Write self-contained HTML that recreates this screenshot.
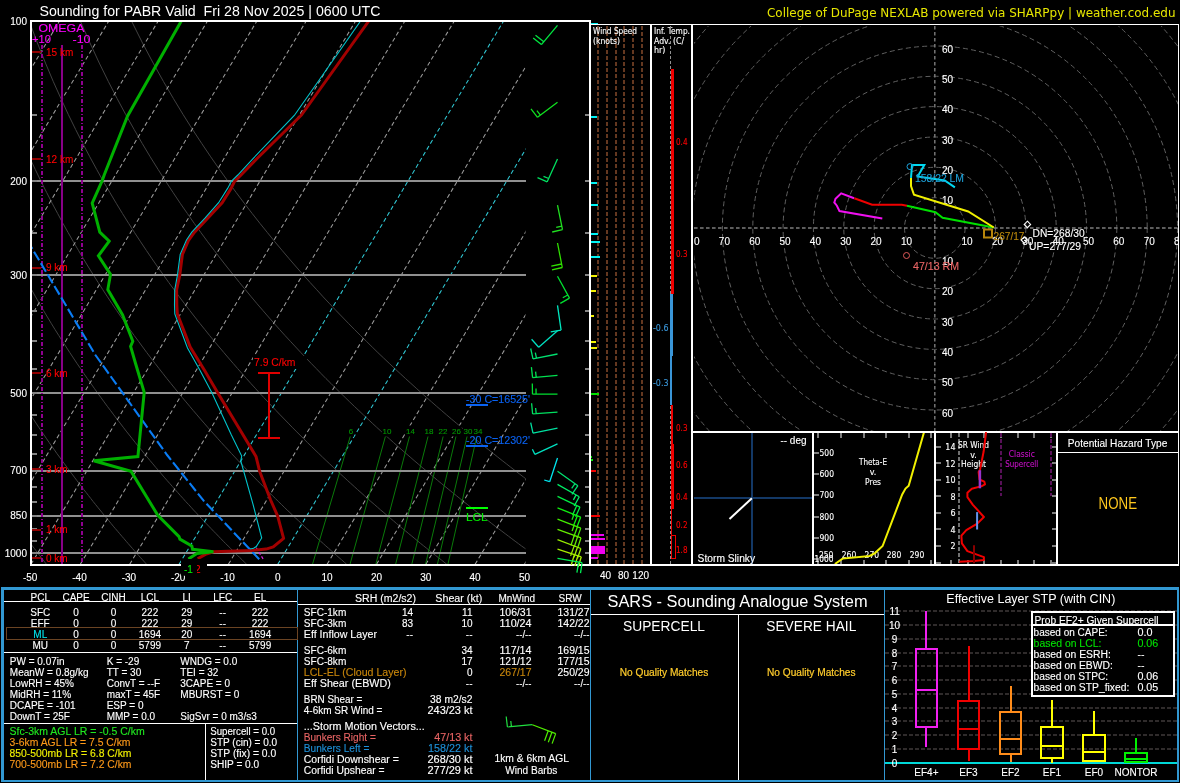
<!DOCTYPE html>
<html><head><meta charset="utf-8"><title>Sounding for PABR</title>
<style>
html,body{margin:0;padding:0;background:#000;}
body{width:1180px;height:783px;overflow:hidden;font-family:"Liberation Sans",sans-serif;}
svg{display:block;will-change:transform}
text{white-space:pre}
</style></head><body>
<svg width="1180" height="783" viewBox="0 0 1180 783">
<rect x="0" y="0" width="1180" height="783" fill="#000"/>
<defs><clipPath id="skc"><rect x="31" y="21" width="494.5" height="543.5"/></clipPath><clipPath id="skf"><rect x="31" y="21" width="559" height="543.5"/></clipPath></defs>
<g clip-path="url(#skc)">
<polyline points="-53.6,564.3 -55.1,562.1 -56.5,559.8 -58.0,557.6 -59.5,555.3 -61.0,553.0 -62.4,550.7 -63.9,548.3 -65.4,546.0 -66.9,543.6 -68.5,541.2 -70.0,538.7 -71.5,536.2 -73.0,533.7 -74.6,531.2 -76.1,528.7 -77.7,526.1 -79.3,523.5 -80.8,520.8 -82.4,518.2 -84.0,515.5 -85.6,512.7 -87.2,510.0 -88.8,507.2 -90.4,504.3 -92.1,501.5 -93.7,498.5 -95.4,495.6 -97.0,492.6 -98.7,489.6 -100.4,486.5 -102.0,483.4 -103.7,480.3 -105.4,477.1 -107.1,473.9 -108.9,470.6 -110.6,467.3 -112.3,463.9 -114.1,460.5 -115.8,457.0 -117.6,453.5 -119.4,449.9 -121.2,446.3 -123.0,442.6 -124.8,438.8 -126.6,435.0 -128.4,431.1 -130.3,427.2 -132.1,423.1 -134.0,419.0 -135.9,414.9 -137.7,410.6 -139.6,406.3 -141.5,401.9 -143.5,397.4 -145.4,392.9 -147.3,388.2 -149.3,383.4 -151.3,378.6 -153.3,373.6 -155.2,368.5 -157.3,363.3 -159.3,358.0 -161.3,352.6 -163.3,347.0 -165.4,341.3 -167.5,335.5 -169.5,329.5 -171.6,323.3 -173.7,317.0 -175.8,310.5 -178.0,303.8 -180.1,296.9 -182.3,289.7 -184.4,282.4 -186.6,274.8 -188.7,267.0 -190.9,258.9 -193.1,250.5 -195.3,241.8 -197.5,232.7 -199.7,223.3 -201.9,213.4 -204.0,203.2 -206.2,192.4 -208.4,181.2 -210.5,169.3 -212.6,156.8 -214.6,143.6 -216.6,129.6 -218.6,114.7 -220.4,98.7 -222.2,81.6 -223.8,63.1 -225.2,43.0 -226.4,21.0" fill="none" stroke="#414141" stroke-width="1"/>
<polyline points="46.5,564.3 44.7,562.1 43.0,559.8 41.3,557.6 39.5,555.3 37.7,553.0 36.0,550.7 34.2,548.3 32.4,546.0 30.6,543.6 28.8,541.2 27.0,538.7 25.2,536.2 23.3,533.7 21.5,531.2 19.6,528.7 17.8,526.1 15.9,523.5 14.0,520.8 12.1,518.2 10.2,515.5 8.3,512.7 6.4,510.0 4.4,507.2 2.5,504.3 0.5,501.5 -1.4,498.5 -3.4,495.6 -5.4,492.6 -7.4,489.6 -9.4,486.5 -11.5,483.4 -13.5,480.3 -15.6,477.1 -17.6,473.9 -19.7,470.6 -21.8,467.3 -23.9,463.9 -26.0,460.5 -28.2,457.0 -30.3,453.5 -32.5,449.9 -34.7,446.3 -36.9,442.6 -39.1,438.8 -41.3,435.0 -43.5,431.1 -45.8,427.2 -48.1,423.1 -50.3,419.0 -52.7,414.9 -55.0,410.6 -57.3,406.3 -59.7,401.9 -62.0,397.4 -64.4,392.9 -66.8,388.2 -69.3,383.4 -71.7,378.6 -74.2,373.6 -76.7,368.5 -79.2,363.3 -81.7,358.0 -84.3,352.6 -86.8,347.0 -89.4,341.3 -92.0,335.5 -94.7,329.5 -97.3,323.3 -100.0,317.0 -102.7,310.5 -105.5,303.8 -108.2,296.9 -111.0,289.7 -113.8,282.4 -116.6,274.8 -119.4,267.0 -122.3,258.9 -125.2,250.5 -128.1,241.8 -131.1,232.7 -134.0,223.3 -137.0,213.4 -140.0,203.2 -143.0,192.4 -146.0,181.2 -149.1,169.3 -152.1,156.8 -155.1,143.6 -158.2,129.6 -161.2,114.7 -164.2,98.7 -167.1,81.6 -169.9,63.1 -172.7,43.0 -175.3,21.0" fill="none" stroke="#414141" stroke-width="1"/>
<polyline points="146.6,564.3 144.6,562.1 142.5,559.8 140.5,557.6 138.5,555.3 136.4,553.0 134.4,550.7 132.3,548.3 130.3,546.0 128.2,543.6 126.1,541.2 124.0,538.7 121.8,536.2 119.7,533.7 117.6,531.2 115.4,528.7 113.2,526.1 111.1,523.5 108.9,520.8 106.7,518.2 104.4,515.5 102.2,512.7 100.0,510.0 97.7,507.2 95.4,504.3 93.1,501.5 90.8,498.5 88.5,495.6 86.2,492.6 83.8,489.6 81.5,486.5 79.1,483.4 76.7,480.3 74.3,477.1 71.9,473.9 69.4,470.6 67.0,467.3 64.5,463.9 62.0,460.5 59.5,457.0 56.9,453.5 54.4,449.9 51.8,446.3 49.2,442.6 46.6,438.8 44.0,435.0 41.4,431.1 38.7,427.2 36.0,423.1 33.3,419.0 30.6,414.9 27.8,410.6 25.0,406.3 22.2,401.9 19.4,397.4 16.5,392.9 13.7,388.2 10.8,383.4 7.8,378.6 4.9,373.6 1.9,368.5 -1.1,363.3 -4.2,358.0 -7.2,352.6 -10.3,347.0 -13.5,341.3 -16.6,335.5 -19.8,329.5 -23.0,323.3 -26.3,317.0 -29.6,310.5 -32.9,303.8 -36.3,296.9 -39.7,289.7 -43.1,282.4 -46.6,274.8 -50.1,267.0 -53.7,258.9 -57.3,250.5 -61.0,241.8 -64.6,232.7 -68.4,223.3 -72.1,213.4 -76.0,203.2 -79.8,192.4 -83.7,181.2 -87.7,169.3 -91.6,156.8 -95.7,143.6 -99.7,129.6 -103.8,114.7 -107.9,98.7 -112.0,81.6 -116.1,63.1 -120.2,43.0 -124.2,21.0" fill="none" stroke="#414141" stroke-width="1"/>
<polyline points="246.6,564.3 244.4,562.1 242.1,559.8 239.8,557.6 237.5,555.3 235.1,553.0 232.8,550.7 230.5,548.3 228.1,546.0 225.7,543.6 223.3,541.2 220.9,538.7 218.5,536.2 216.1,533.7 213.6,531.2 211.2,528.7 208.7,526.1 206.2,523.5 203.7,520.8 201.2,518.2 198.7,515.5 196.1,512.7 193.5,510.0 191.0,507.2 188.4,504.3 185.7,501.5 183.1,498.5 180.4,495.6 177.8,492.6 175.1,489.6 172.4,486.5 169.7,483.4 166.9,480.3 164.1,477.1 161.4,473.9 158.6,470.6 155.7,467.3 152.9,463.9 150.0,460.5 147.1,457.0 144.2,453.5 141.3,449.9 138.3,446.3 135.3,442.6 132.3,438.8 129.3,435.0 126.2,431.1 123.2,427.2 120.1,423.1 116.9,419.0 113.8,414.9 110.6,410.6 107.3,406.3 104.1,401.9 100.8,397.4 97.5,392.9 94.2,388.2 90.8,383.4 87.4,378.6 83.9,373.6 80.5,368.5 76.9,363.3 73.4,358.0 69.8,352.6 66.2,347.0 62.5,341.3 58.8,335.5 55.0,329.5 51.2,323.3 47.4,317.0 43.5,310.5 39.6,303.8 35.6,296.9 31.6,289.7 27.5,282.4 23.3,274.8 19.1,267.0 14.9,258.9 10.6,250.5 6.2,241.8 1.8,232.7 -2.7,223.3 -7.3,213.4 -11.9,203.2 -16.6,192.4 -21.4,181.2 -26.2,169.3 -31.2,156.8 -36.2,143.6 -41.2,129.6 -46.4,114.7 -51.6,98.7 -56.9,81.6 -62.2,63.1 -67.6,43.0 -73.0,21.0" fill="none" stroke="#414141" stroke-width="1"/>
<polyline points="346.7,564.3 344.2,562.1 341.6,559.8 339.0,557.6 336.4,555.3 333.8,553.0 331.2,550.7 328.6,548.3 325.9,546.0 323.3,543.6 320.6,541.2 317.9,538.7 315.2,536.2 312.5,533.7 309.7,531.2 306.9,528.7 304.2,526.1 301.4,523.5 298.6,520.8 295.7,518.2 292.9,515.5 290.0,512.7 287.1,510.0 284.2,507.2 281.3,504.3 278.3,501.5 275.4,498.5 272.4,495.6 269.4,492.6 266.3,489.6 263.3,486.5 260.2,483.4 257.1,480.3 254.0,477.1 250.9,473.9 247.7,470.6 244.5,467.3 241.3,463.9 238.0,460.5 234.8,457.0 231.5,453.5 228.2,449.9 224.8,446.3 221.4,442.6 218.0,438.8 214.6,435.0 211.1,431.1 207.6,427.2 204.1,423.1 200.5,419.0 197.0,414.9 193.3,410.6 189.7,406.3 186.0,401.9 182.2,397.4 178.5,392.9 174.7,388.2 170.8,383.4 166.9,378.6 163.0,373.6 159.0,368.5 155.0,363.3 150.9,358.0 146.8,352.6 142.7,347.0 138.5,341.3 134.2,335.5 129.9,329.5 125.5,323.3 121.1,317.0 116.6,310.5 112.1,303.8 107.5,296.9 102.8,289.7 98.1,282.4 93.3,274.8 88.4,267.0 83.5,258.9 78.5,250.5 73.4,241.8 68.2,232.7 62.9,223.3 57.6,213.4 52.1,203.2 46.6,192.4 40.9,181.2 35.2,169.3 29.3,156.8 23.3,143.6 17.2,129.6 11.0,114.7 4.7,98.7 -1.8,81.6 -8.4,63.1 -15.1,43.0 -21.9,21.0" fill="none" stroke="#414141" stroke-width="1"/>
<polyline points="446.8,564.3 444.0,562.1 441.2,559.8 438.3,557.6 435.4,555.3 432.5,553.0 429.6,550.7 426.7,548.3 423.8,546.0 420.8,543.6 417.9,541.2 414.9,538.7 411.9,536.2 408.8,533.7 405.8,531.2 402.7,528.7 399.6,526.1 396.5,523.5 393.4,520.8 390.3,518.2 387.1,515.5 383.9,512.7 380.7,510.0 377.5,507.2 374.2,504.3 370.9,501.5 367.6,498.5 364.3,495.6 361.0,492.6 357.6,489.6 354.2,486.5 350.8,483.4 347.3,480.3 343.9,477.1 340.4,473.9 336.8,470.6 333.3,467.3 329.7,463.9 326.1,460.5 322.4,457.0 318.8,453.5 315.0,449.9 311.3,446.3 307.5,442.6 303.7,438.8 299.9,435.0 296.0,431.1 292.1,427.2 288.2,423.1 284.2,419.0 280.2,414.9 276.1,410.6 272.0,406.3 267.9,401.9 263.7,397.4 259.4,392.9 255.2,388.2 250.8,383.4 246.5,378.6 242.1,373.6 237.6,368.5 233.1,363.3 228.5,358.0 223.9,352.6 219.2,347.0 214.4,341.3 209.6,335.5 204.8,329.5 199.8,323.3 194.8,317.0 189.8,310.5 184.6,303.8 179.4,296.9 174.1,289.7 168.7,282.4 163.3,274.8 157.7,267.0 152.1,258.9 146.4,250.5 140.6,241.8 134.6,232.7 128.6,223.3 122.4,213.4 116.2,203.2 109.8,192.4 103.2,181.2 96.6,169.3 89.8,156.8 82.8,143.6 75.7,129.6 68.4,114.7 61.0,98.7 53.3,81.6 45.5,63.1 37.4,43.0 29.2,21.0" fill="none" stroke="#414141" stroke-width="1"/>
<polyline points="546.9,564.3 543.8,562.1 540.7,559.8 537.6,557.6 534.4,555.3 531.2,553.0 528.1,550.7 524.9,548.3 521.6,546.0 518.4,543.6 515.1,541.2 511.8,538.7 508.5,536.2 505.2,533.7 501.9,531.2 498.5,528.7 495.1,526.1 491.7,523.5 488.3,520.8 484.8,518.2 481.3,515.5 477.8,512.7 474.3,510.0 470.7,507.2 467.2,504.3 463.5,501.5 459.9,498.5 456.3,495.6 452.6,492.6 448.9,489.6 445.1,486.5 441.3,483.4 437.5,480.3 433.7,477.1 429.9,473.9 426.0,470.6 422.0,467.3 418.1,463.9 414.1,460.5 410.1,457.0 406.0,453.5 401.9,449.9 397.8,446.3 393.6,442.6 389.4,438.8 385.2,435.0 380.9,431.1 376.6,427.2 372.2,423.1 367.8,419.0 363.4,414.9 358.9,410.6 354.3,406.3 349.7,401.9 345.1,397.4 340.4,392.9 335.7,388.2 330.9,383.4 326.0,378.6 321.1,373.6 316.2,368.5 311.1,363.3 306.0,358.0 300.9,352.6 295.7,347.0 290.4,341.3 285.0,335.5 279.6,329.5 274.1,323.3 268.5,317.0 262.9,310.5 257.1,303.8 251.3,296.9 245.4,289.7 239.4,282.4 233.3,274.8 227.0,267.0 220.7,258.9 214.3,250.5 207.7,241.8 201.0,232.7 194.2,223.3 187.3,213.4 180.2,203.2 173.0,192.4 165.6,181.2 158.0,169.3 150.2,156.8 142.3,143.6 134.2,129.6 125.8,114.7 117.2,98.7 108.4,81.6 99.3,63.1 90.0,43.0 80.3,21.0" fill="none" stroke="#414141" stroke-width="1"/>
<polyline points="647.0,564.3 643.6,562.1 640.2,559.8 636.8,557.6 633.4,555.3 629.9,553.0 626.5,550.7 623.0,548.3 619.5,546.0 615.9,543.6 612.4,541.2 608.8,538.7 605.2,536.2 601.6,533.7 597.9,531.2 594.3,528.7 590.6,526.1 586.9,523.5 583.1,520.8 579.3,518.2 575.5,515.5 571.7,512.7 567.9,510.0 564.0,507.2 560.1,504.3 556.1,501.5 552.2,498.5 548.2,495.6 544.2,492.6 540.1,489.6 536.0,486.5 531.9,483.4 527.8,480.3 523.6,477.1 519.4,473.9 515.1,470.6 510.8,467.3 506.5,463.9 502.1,460.5 497.7,457.0 493.3,453.5 488.8,449.9 484.3,446.3 479.7,442.6 475.1,438.8 470.5,435.0 465.8,431.1 461.1,427.2 456.3,423.1 451.4,419.0 446.6,414.9 441.6,410.6 436.6,406.3 431.6,401.9 426.5,397.4 421.4,392.9 416.2,388.2 410.9,383.4 405.6,378.6 400.2,373.6 394.7,368.5 389.2,363.3 383.6,358.0 377.9,352.6 372.2,347.0 366.4,341.3 360.5,335.5 354.5,329.5 348.4,323.3 342.3,317.0 336.0,310.5 329.7,303.8 323.2,296.9 316.7,289.7 310.0,282.4 303.2,274.8 296.3,267.0 289.3,258.9 282.2,250.5 274.9,241.8 267.5,232.7 259.9,223.3 252.1,213.4 244.2,203.2 236.1,192.4 227.9,181.2 219.4,169.3 210.7,156.8 201.8,143.6 192.6,129.6 183.2,114.7 173.5,98.7 163.5,81.6 153.2,63.1 142.5,43.0 131.5,21.0" fill="none" stroke="#414141" stroke-width="1"/>
<line x1="-511.9" y1="564.3" x2="-187.3" y2="21.0" stroke="#9c9c9c" stroke-width="1.05" stroke-dasharray="4.2 2.8"/>
<line x1="-462.5" y1="564.3" x2="-137.9" y2="21.0" stroke="#9c9c9c" stroke-width="1.05" stroke-dasharray="4.2 2.8"/>
<line x1="-413.1" y1="564.3" x2="-88.6" y2="21.0" stroke="#9c9c9c" stroke-width="1.05" stroke-dasharray="4.2 2.8"/>
<line x1="-363.8" y1="564.3" x2="-39.2" y2="21.0" stroke="#9c9c9c" stroke-width="1.05" stroke-dasharray="4.2 2.8"/>
<line x1="-314.4" y1="564.3" x2="10.1" y2="21.0" stroke="#9c9c9c" stroke-width="1.05" stroke-dasharray="4.2 2.8"/>
<line x1="-265.1" y1="564.3" x2="59.5" y2="21.0" stroke="#9c9c9c" stroke-width="1.05" stroke-dasharray="4.2 2.8"/>
<line x1="-215.8" y1="564.3" x2="108.8" y2="21.0" stroke="#9c9c9c" stroke-width="1.05" stroke-dasharray="4.2 2.8"/>
<line x1="-166.4" y1="564.3" x2="158.2" y2="21.0" stroke="#9c9c9c" stroke-width="1.05" stroke-dasharray="4.2 2.8"/>
<line x1="-117.1" y1="564.3" x2="207.5" y2="21.0" stroke="#9c9c9c" stroke-width="1.05" stroke-dasharray="4.2 2.8"/>
<line x1="-67.7" y1="564.3" x2="256.9" y2="21.0" stroke="#9c9c9c" stroke-width="1.05" stroke-dasharray="4.2 2.8"/>
<line x1="-18.4" y1="564.3" x2="306.2" y2="21.0" stroke="#9c9c9c" stroke-width="1.05" stroke-dasharray="4.2 2.8"/>
<line x1="31.0" y1="564.3" x2="355.6" y2="21.0" stroke="#9c9c9c" stroke-width="1.05" stroke-dasharray="4.2 2.8"/>
<line x1="80.3" y1="564.3" x2="404.9" y2="21.0" stroke="#9c9c9c" stroke-width="1.05" stroke-dasharray="4.2 2.8"/>
<line x1="129.7" y1="564.3" x2="454.3" y2="21.0" stroke="#9c9c9c" stroke-width="1.05" stroke-dasharray="4.2 2.8"/>
<line x1="179.1" y1="564.3" x2="503.6" y2="21.0" stroke="#30c8d4" stroke-width="1.05" stroke-dasharray="4.2 2.8"/>
<line x1="228.4" y1="564.3" x2="553.0" y2="21.0" stroke="#9c9c9c" stroke-width="1.05" stroke-dasharray="4.2 2.8"/>
<line x1="277.8" y1="564.3" x2="602.3" y2="21.0" stroke="#30c8d4" stroke-width="1.05" stroke-dasharray="4.2 2.8"/>
<line x1="327.1" y1="564.3" x2="651.7" y2="21.0" stroke="#9c9c9c" stroke-width="1.05" stroke-dasharray="4.2 2.8"/>
<line x1="376.5" y1="564.3" x2="701.0" y2="21.0" stroke="#9c9c9c" stroke-width="1.05" stroke-dasharray="4.2 2.8"/>
<line x1="425.8" y1="564.3" x2="750.4" y2="21.0" stroke="#9c9c9c" stroke-width="1.05" stroke-dasharray="4.2 2.8"/>
<line x1="475.1" y1="564.3" x2="799.7" y2="21.0" stroke="#9c9c9c" stroke-width="1.05" stroke-dasharray="4.2 2.8"/>
<line x1="524.5" y1="564.3" x2="849.1" y2="21.0" stroke="#9c9c9c" stroke-width="1.05" stroke-dasharray="4.2 2.8"/>
<line x1="312.5" y1="564.3" x2="350.7" y2="435.0" stroke="#0a7a0a" stroke-width="1"/>
<line x1="350.0" y1="564.3" x2="385.8" y2="435.0" stroke="#0a7a0a" stroke-width="1"/>
<line x1="375.8" y1="564.3" x2="409.9" y2="435.0" stroke="#0a7a0a" stroke-width="1"/>
<line x1="395.6" y1="564.3" x2="428.4" y2="435.0" stroke="#0a7a0a" stroke-width="1"/>
<line x1="411.8" y1="564.3" x2="443.5" y2="435.0" stroke="#0a7a0a" stroke-width="1"/>
<line x1="425.5" y1="564.3" x2="456.3" y2="435.0" stroke="#0a7a0a" stroke-width="1"/>
<line x1="437.4" y1="564.3" x2="467.4" y2="435.0" stroke="#0a7a0a" stroke-width="1"/>
<line x1="447.9" y1="564.3" x2="477.1" y2="435.0" stroke="#0a7a0a" stroke-width="1"/>
</g>
<rect x="348.0" y="425.5" width="6.0" height="11.0" fill="#000"/>
<text x="351.0" y="434.0" font-size="8" fill="#009600" stroke="#009600" stroke-width="0.12" font-family='"Liberation Sans", sans-serif' text-anchor="middle">6</text>
<rect x="381.8" y="425.5" width="10.5" height="11.0" fill="#000"/>
<text x="387.0" y="434.0" font-size="8" fill="#009600" stroke="#009600" stroke-width="0.12" font-family='"Liberation Sans", sans-serif' text-anchor="middle">10</text>
<rect x="405.2" y="425.5" width="10.5" height="11.0" fill="#000"/>
<text x="410.5" y="434.0" font-size="8" fill="#009600" stroke="#009600" stroke-width="0.12" font-family='"Liberation Sans", sans-serif' text-anchor="middle">14</text>
<rect x="423.8" y="425.5" width="10.5" height="11.0" fill="#000"/>
<text x="429.0" y="434.0" font-size="8" fill="#009600" stroke="#009600" stroke-width="0.12" font-family='"Liberation Sans", sans-serif' text-anchor="middle">18</text>
<rect x="437.8" y="425.5" width="10.5" height="11.0" fill="#000"/>
<text x="443.0" y="434.0" font-size="8" fill="#009600" stroke="#009600" stroke-width="0.12" font-family='"Liberation Sans", sans-serif' text-anchor="middle">22</text>
<rect x="451.2" y="425.5" width="10.5" height="11.0" fill="#000"/>
<text x="456.5" y="434.0" font-size="8" fill="#009600" stroke="#009600" stroke-width="0.12" font-family='"Liberation Sans", sans-serif' text-anchor="middle">26</text>
<rect x="462.8" y="425.5" width="10.5" height="11.0" fill="#000"/>
<text x="468.0" y="434.0" font-size="8" fill="#009600" stroke="#009600" stroke-width="0.12" font-family='"Liberation Sans", sans-serif' text-anchor="middle">30</text>
<rect x="472.8" y="425.5" width="10.5" height="11.0" fill="#000"/>
<text x="478.0" y="434.0" font-size="8" fill="#009600" stroke="#009600" stroke-width="0.12" font-family='"Liberation Sans", sans-serif' text-anchor="middle">34</text>
<g shape-rendering="crispEdges">
<line x1="31.0" y1="181.2" x2="525.5" y2="181.2" stroke="#909090" stroke-width="2"/>
<line x1="31.0" y1="274.8" x2="525.5" y2="274.8" stroke="#909090" stroke-width="2"/>
<line x1="31.0" y1="392.9" x2="525.5" y2="392.9" stroke="#909090" stroke-width="2"/>
<line x1="31.0" y1="470.6" x2="525.5" y2="470.6" stroke="#909090" stroke-width="2"/>
<line x1="31.0" y1="515.5" x2="525.5" y2="515.5" stroke="#909090" stroke-width="2"/>
<line x1="31.0" y1="553.0" x2="525.5" y2="553.0" stroke="#909090" stroke-width="2"/>
<line x1="32.0" y1="114.7" x2="37.0" y2="114.7" stroke="#848484" stroke-width="2"/>
<line x1="584.5" y1="114.7" x2="589.0" y2="114.7" stroke="#848484" stroke-width="2"/>
<line x1="32.0" y1="181.2" x2="37.0" y2="181.2" stroke="#848484" stroke-width="2"/>
<line x1="584.5" y1="181.2" x2="589.0" y2="181.2" stroke="#848484" stroke-width="2"/>
<line x1="32.0" y1="232.7" x2="37.0" y2="232.7" stroke="#848484" stroke-width="2"/>
<line x1="584.5" y1="232.7" x2="589.0" y2="232.7" stroke="#848484" stroke-width="2"/>
<line x1="32.0" y1="274.8" x2="37.0" y2="274.8" stroke="#848484" stroke-width="2"/>
<line x1="584.5" y1="274.8" x2="589.0" y2="274.8" stroke="#848484" stroke-width="2"/>
<line x1="32.0" y1="310.5" x2="37.0" y2="310.5" stroke="#848484" stroke-width="2"/>
<line x1="584.5" y1="310.5" x2="589.0" y2="310.5" stroke="#848484" stroke-width="2"/>
<line x1="32.0" y1="341.3" x2="37.0" y2="341.3" stroke="#848484" stroke-width="2"/>
<line x1="584.5" y1="341.3" x2="589.0" y2="341.3" stroke="#848484" stroke-width="2"/>
<line x1="32.0" y1="368.5" x2="37.0" y2="368.5" stroke="#848484" stroke-width="2"/>
<line x1="584.5" y1="368.5" x2="589.0" y2="368.5" stroke="#848484" stroke-width="2"/>
<line x1="32.0" y1="392.9" x2="37.0" y2="392.9" stroke="#848484" stroke-width="2"/>
<line x1="584.5" y1="392.9" x2="589.0" y2="392.9" stroke="#848484" stroke-width="2"/>
<line x1="32.0" y1="414.9" x2="37.0" y2="414.9" stroke="#848484" stroke-width="2"/>
<line x1="584.5" y1="414.9" x2="589.0" y2="414.9" stroke="#848484" stroke-width="2"/>
<line x1="32.0" y1="435.0" x2="37.0" y2="435.0" stroke="#848484" stroke-width="2"/>
<line x1="584.5" y1="435.0" x2="589.0" y2="435.0" stroke="#848484" stroke-width="2"/>
<line x1="32.0" y1="453.5" x2="37.0" y2="453.5" stroke="#848484" stroke-width="2"/>
<line x1="584.5" y1="453.5" x2="589.0" y2="453.5" stroke="#848484" stroke-width="2"/>
<line x1="32.0" y1="470.6" x2="37.0" y2="470.6" stroke="#848484" stroke-width="2"/>
<line x1="584.5" y1="470.6" x2="589.0" y2="470.6" stroke="#848484" stroke-width="2"/>
<line x1="32.0" y1="486.5" x2="37.0" y2="486.5" stroke="#848484" stroke-width="2"/>
<line x1="584.5" y1="486.5" x2="589.0" y2="486.5" stroke="#848484" stroke-width="2"/>
<line x1="32.0" y1="501.5" x2="37.0" y2="501.5" stroke="#848484" stroke-width="2"/>
<line x1="584.5" y1="501.5" x2="589.0" y2="501.5" stroke="#848484" stroke-width="2"/>
<line x1="32.0" y1="515.5" x2="37.0" y2="515.5" stroke="#848484" stroke-width="2"/>
<line x1="584.5" y1="515.5" x2="589.0" y2="515.5" stroke="#848484" stroke-width="2"/>
<line x1="32.0" y1="528.7" x2="37.0" y2="528.7" stroke="#848484" stroke-width="2"/>
<line x1="584.5" y1="528.7" x2="589.0" y2="528.7" stroke="#848484" stroke-width="2"/>
<line x1="32.0" y1="541.2" x2="37.0" y2="541.2" stroke="#848484" stroke-width="2"/>
<line x1="584.5" y1="541.2" x2="589.0" y2="541.2" stroke="#848484" stroke-width="2"/>
<line x1="32.0" y1="553.0" x2="37.0" y2="553.0" stroke="#848484" stroke-width="2"/>
<line x1="584.5" y1="553.0" x2="589.0" y2="553.0" stroke="#848484" stroke-width="2"/>
</g>
<g shape-rendering="crispEdges">
<line x1="62.0" y1="45.0" x2="62.0" y2="564.0" stroke="#880088" stroke-width="2"/>
<line x1="42.0" y1="45.0" x2="42.0" y2="564.0" stroke="#900090" stroke-width="2" stroke-dasharray="4 2 1 2"/>
<line x1="82.0" y1="45.0" x2="82.0" y2="564.0" stroke="#900090" stroke-width="2" stroke-dasharray="4 2 1 2"/>
</g>
<text x="61.4" y="32.3" font-size="11" fill="#f0f" stroke="#f0f" stroke-width="0.12" font-family='"Liberation Sans", sans-serif' text-anchor="middle" textLength="46" lengthAdjust="spacingAndGlyphs">OMEGA</text>
<text x="32.0" y="43.0" font-size="11" fill="#f0f" stroke="#f0f" stroke-width="0.12" font-family='"Liberation Sans", sans-serif' textLength="19" lengthAdjust="spacingAndGlyphs">+10</text>
<text x="72.5" y="43.0" font-size="11" fill="#f0f" stroke="#f0f" stroke-width="0.12" font-family='"Liberation Sans", sans-serif' textLength="18" lengthAdjust="spacingAndGlyphs">-10</text>
<line x1="31.0" y1="558.2" x2="41.0" y2="558.2" stroke="#900000" stroke-width="2" shape-rendering="crispEdges"/>
<text x="46.0" y="561.9" font-size="10" fill="#f00" stroke="#f00" stroke-width="0.12" font-family='"Liberation Sans", sans-serif'>0 km</text>
<line x1="31.0" y1="529.5" x2="41.0" y2="529.5" stroke="#900000" stroke-width="2" shape-rendering="crispEdges"/>
<text x="46.0" y="533.2" font-size="10" fill="#f00" stroke="#f00" stroke-width="0.12" font-family='"Liberation Sans", sans-serif'>1 km</text>
<line x1="31.0" y1="469.2" x2="41.0" y2="469.2" stroke="#900000" stroke-width="2" shape-rendering="crispEdges"/>
<text x="46.0" y="472.9" font-size="10" fill="#f00" stroke="#f00" stroke-width="0.12" font-family='"Liberation Sans", sans-serif'>3 km</text>
<line x1="31.0" y1="372.8" x2="41.0" y2="372.8" stroke="#900000" stroke-width="2" shape-rendering="crispEdges"/>
<text x="46.0" y="376.5" font-size="10" fill="#f00" stroke="#f00" stroke-width="0.12" font-family='"Liberation Sans", sans-serif'>6 km</text>
<line x1="31.0" y1="267.7" x2="41.0" y2="267.7" stroke="#900000" stroke-width="2" shape-rendering="crispEdges"/>
<text x="46.0" y="271.4" font-size="10" fill="#f00" stroke="#f00" stroke-width="0.12" font-family='"Liberation Sans", sans-serif'>9 km</text>
<line x1="31.0" y1="159.0" x2="41.0" y2="159.0" stroke="#900000" stroke-width="2" shape-rendering="crispEdges"/>
<text x="46.0" y="162.7" font-size="10" fill="#f00" stroke="#f00" stroke-width="0.12" font-family='"Liberation Sans", sans-serif'>12 km</text>
<line x1="31.0" y1="52.0" x2="41.0" y2="52.0" stroke="#900000" stroke-width="2" shape-rendering="crispEdges"/>
<text x="46.0" y="55.7" font-size="10" fill="#f00" stroke="#f00" stroke-width="0.12" font-family='"Liberation Sans", sans-serif'>15 km</text>
<g clip-path="url(#skc)">
<polyline points="259.2,559.2 203.8,500.9 167.1,455.0 95.4,355.0 31.7,247.8 20.0,228.0" fill="none" stroke="#0a7cf4" stroke-width="2.1" stroke-dasharray="10 3.3"/>
<polyline points="256.3,547.8 263.4,559.4" fill="none" stroke="#e020e0" stroke-width="1.2" stroke-dasharray="3 2"/>
<polyline points="368.8,21.0 319.4,90.0 301.5,115.0 256.8,158.8 241.0,175.0 234.7,181.1 231.1,188.4 222.2,202.7 207.9,217.9 194.5,232.2 188.7,240.0 182.4,254.3 179.8,274.9 176.6,290.0 176.8,305.0 177.3,313.9 190.2,347.0 204.3,370.0 217.7,392.8 243.1,435.0 256.0,456.4 259.6,471.2 270.6,500.0 277.7,516.1 283.6,538.4 273.3,546.9 266.1,549.1 251.8,550.5 213.4,551.8 205.4,554.4 197.7,558.7" fill="none" stroke="#a20000" stroke-width="3" stroke-linejoin="round"/>
<polyline points="360.6,21.0 312.2,90.0 294.3,115.5 252.8,158.8 237.8,175.0 231.6,181.1 227.6,188.4 218.6,202.7 205.2,217.9 191.8,232.2 186.5,240.0 180.2,254.3 177.5,274.9 174.7,290.0 174.5,305.0 174.8,313.9 187.5,347.9 199.8,370.0 211.9,392.8 231.4,435.0 241.7,456.0 240.8,460.9 252.9,503.8 261.7,538.0 256.3,546.5 253.6,548.3 250.0,549.0" fill="none" stroke="#00c4cc" stroke-width="1.1"/>
<polyline points="181.3,21.0 127.6,116.0 104.2,175.0 102.0,181.1 92.2,203.2 99.8,232.2 109.2,241.1 98.4,255.9 110.5,274.4 107.8,289.6 122.6,315.0 132.8,341.3 130.6,346.4 135.4,363.0 144.2,392.4 137.9,456.6 93.7,460.7 131.1,471.4 157.8,515.3 179.0,536.6 179.9,539.1 191.8,545.9 192.6,549.3 213.4,551.8 196.9,553.5 188.4,559.0" fill="none" stroke="#00b000" stroke-width="3" stroke-linejoin="miter"/>
</g>
<rect x="253.0" y="356.0" width="54.0" height="13.0" fill="#000"/>
<text x="254.0" y="366.0" font-size="11" fill="#f00" stroke="#f00" stroke-width="0.12" font-family='"Liberation Sans", sans-serif' textLength="41.5" lengthAdjust="spacingAndGlyphs">7.9 C/km</text>
<g shape-rendering="crispEdges">
<line x1="269.0" y1="373.0" x2="269.0" y2="438.0" stroke="#e00000" stroke-width="2"/>
<line x1="258.0" y1="373.0" x2="280.0" y2="373.0" stroke="#e00000" stroke-width="2"/>
<line x1="258.0" y1="438.0" x2="280.0" y2="438.0" stroke="#e00000" stroke-width="2"/>
<line x1="466.0" y1="405.0" x2="488.0" y2="405.0" stroke="#0a62f2" stroke-width="2"/>
<line x1="466.0" y1="446.0" x2="488.0" y2="446.0" stroke="#0a62f2" stroke-width="2"/>
<line x1="466.0" y1="508.0" x2="488.0" y2="508.0" stroke="#0f0" stroke-width="2"/>
</g>
<text x="466.0" y="402.5" font-size="11" fill="#0a62f2" stroke="#0a62f2" stroke-width="0.12" font-family='"Liberation Sans", sans-serif' textLength="64" lengthAdjust="spacingAndGlyphs">-30 C=16525'</text>
<text x="466.0" y="443.5" font-size="11" fill="#0a62f2" stroke="#0a62f2" stroke-width="0.12" font-family='"Liberation Sans", sans-serif' textLength="64" lengthAdjust="spacingAndGlyphs">-20 C=12302'</text>
<text x="466.0" y="521.0" font-size="11" fill="#0e0" stroke="#0e0" stroke-width="0.12" font-family='"Liberation Sans", sans-serif' textLength="21.5" lengthAdjust="spacingAndGlyphs">LCL</text>
<g shape-rendering="crispEdges">
<line x1="30.0" y1="21.0" x2="591.0" y2="21.0" stroke="#fff" stroke-width="2"/>
<line x1="31.0" y1="20.0" x2="31.0" y2="566.0" stroke="#fff" stroke-width="2"/>
<line x1="30.0" y1="565.0" x2="591.0" y2="565.0" stroke="#fff" stroke-width="2"/>
<line x1="590.0" y1="20.0" x2="590.0" y2="566.0" stroke="#fff" stroke-width="2"/>
</g>
<text x="27.0" y="24.8" font-size="10" fill="#fff" stroke="#fff" stroke-width="0.12" font-family='"Liberation Sans", sans-serif' text-anchor="end">100</text>
<text x="27.0" y="185.0" font-size="10" fill="#fff" stroke="#fff" stroke-width="0.12" font-family='"Liberation Sans", sans-serif' text-anchor="end">200</text>
<text x="27.0" y="278.6" font-size="10" fill="#fff" stroke="#fff" stroke-width="0.12" font-family='"Liberation Sans", sans-serif' text-anchor="end">300</text>
<text x="27.0" y="396.7" font-size="10" fill="#fff" stroke="#fff" stroke-width="0.12" font-family='"Liberation Sans", sans-serif' text-anchor="end">500</text>
<text x="27.0" y="474.4" font-size="10" fill="#fff" stroke="#fff" stroke-width="0.12" font-family='"Liberation Sans", sans-serif' text-anchor="end">700</text>
<text x="27.0" y="519.3" font-size="10" fill="#fff" stroke="#fff" stroke-width="0.12" font-family='"Liberation Sans", sans-serif' text-anchor="end">850</text>
<text x="27.0" y="556.8" font-size="10" fill="#fff" stroke="#fff" stroke-width="0.12" font-family='"Liberation Sans", sans-serif' text-anchor="end">1000</text>
<text x="30.2" y="580.5" font-size="10" fill="#fff" stroke="#fff" stroke-width="0.12" font-family='"Liberation Sans", sans-serif' text-anchor="middle">-50</text>
<text x="79.5" y="580.5" font-size="10" fill="#fff" stroke="#fff" stroke-width="0.12" font-family='"Liberation Sans", sans-serif' text-anchor="middle">-40</text>
<text x="128.9" y="580.5" font-size="10" fill="#fff" stroke="#fff" stroke-width="0.12" font-family='"Liberation Sans", sans-serif' text-anchor="middle">-30</text>
<text x="178.2" y="580.5" font-size="10" fill="#fff" stroke="#fff" stroke-width="0.12" font-family='"Liberation Sans", sans-serif' text-anchor="middle">-20</text>
<text x="227.6" y="580.5" font-size="10" fill="#fff" stroke="#fff" stroke-width="0.12" font-family='"Liberation Sans", sans-serif' text-anchor="middle">-10</text>
<text x="277.8" y="580.5" font-size="10" fill="#fff" stroke="#fff" stroke-width="0.12" font-family='"Liberation Sans", sans-serif' text-anchor="middle">0</text>
<text x="327.1" y="580.5" font-size="10" fill="#fff" stroke="#fff" stroke-width="0.12" font-family='"Liberation Sans", sans-serif' text-anchor="middle">10</text>
<text x="376.5" y="580.5" font-size="10" fill="#fff" stroke="#fff" stroke-width="0.12" font-family='"Liberation Sans", sans-serif' text-anchor="middle">20</text>
<text x="425.8" y="580.5" font-size="10" fill="#fff" stroke="#fff" stroke-width="0.12" font-family='"Liberation Sans", sans-serif' text-anchor="middle">30</text>
<text x="475.1" y="580.5" font-size="10" fill="#fff" stroke="#fff" stroke-width="0.12" font-family='"Liberation Sans", sans-serif' text-anchor="middle">40</text>
<text x="524.5" y="580.5" font-size="10" fill="#fff" stroke="#fff" stroke-width="0.12" font-family='"Liberation Sans", sans-serif' text-anchor="middle">50</text>
<rect x="181.0" y="559.0" width="26.0" height="16.5" fill="#000"/>
<text x="195.0" y="573.2" font-size="10" fill="#f00" stroke="#f00" stroke-width="0.12" font-family='"Liberation Sans", sans-serif'>2</text>
<rect x="181.0" y="563.0" width="16.0" height="12.5" fill="#000"/>
<text x="184.0" y="573.2" font-size="10" fill="#0e0" stroke="#0e0" stroke-width="0.12" font-family='"Liberation Sans", sans-serif'>-1</text>
<text x="39.5" y="15.5" font-size="14" fill="#fff" font-family='"Liberation Sans", sans-serif' textLength="341" lengthAdjust="spacingAndGlyphs">Sounding for PABR Valid  Fri 28 Nov 2025 | 0600 UTC</text>
<text x="1175.5" y="16.5" font-size="12" fill="#e6e600" font-family='"DejaVu Sans", sans-serif' text-anchor="end" textLength="408.5" lengthAdjust="spacingAndGlyphs">College of DuPage NEXLAB powered via SHARPpy | weather.cod.edu</text>
<path d="M557.5,25.4L541.4,44.6 M541.4,44.6L533.2,37.9 M543.8,41.8L535.5,35.2" stroke="#00e640" stroke-width="1.3" fill="none"/>
<path d="M557.5,102.2L537.5,117.3 M537.5,117.3L531.0,108.9 M540.4,115.1L536.9,110.6" stroke="#10e020" stroke-width="1.3" fill="none"/>
<path d="M557.5,159.0L547.2,181.8 M547.2,181.8L537.5,177.6 M548.7,178.5L543.5,176.3" stroke="#00e060" stroke-width="1.3" fill="none"/>
<path d="M557.5,205.2L562.5,229.7 M562.5,229.7L552.2,232.0 M561.8,226.2L556.2,227.4" stroke="#20e020" stroke-width="1.3" fill="none"/>
<path d="M557.5,243.0L562.3,267.5 M562.3,267.5L552.0,269.8 M561.6,264.0L551.3,266.2" stroke="#30e000" stroke-width="1.3" fill="none"/>
<path d="M557.5,276.2L569.5,298.1 M569.5,298.1L560.3,303.4 M567.8,295.0L562.8,297.8" stroke="#00e030" stroke-width="1.3" fill="none"/>
<path d="M557.5,305.4L561.1,330.1 M561.1,330.1L550.7,331.9" stroke="#00e8c0" stroke-width="1.3" fill="none"/>
<path d="M557.5,330.7L538.7,347.2 M538.7,347.2L531.6,339.3" stroke="#00e0c0" stroke-width="1.3" fill="none"/>
<path d="M557.5,354.0L533.0,358.9 M533.0,358.9L530.7,348.5 M536.5,358.2L535.3,352.6" stroke="#00e070" stroke-width="1.3" fill="none"/>
<path d="M557.5,375.3L532.6,377.6 M532.6,377.6L531.4,367.1 M536.2,377.3L535.6,371.6" stroke="#00e050" stroke-width="1.3" fill="none"/>
<path d="M557.5,394.2L532.5,394.2 M532.5,394.2L532.3,383.6 M536.1,394.2L536.0,388.5" stroke="#00e030" stroke-width="1.3" fill="none"/>
<path d="M557.5,412.1L532.6,413.9 M532.6,413.9L531.6,403.3 M536.2,413.6L535.6,408.0" stroke="#00e060" stroke-width="1.3" fill="none"/>
<path d="M557.5,428.2L533.0,433.1 M533.0,433.1L530.7,422.7" stroke="#00e0a0" stroke-width="1.3" fill="none"/>
<path d="M557.5,443.8L534.9,454.4 M534.9,454.4L532.4,449.3" stroke="#00e0c0" stroke-width="1.3" fill="none"/>
<path d="M557.5,458.0L549.7,481.7 M549.7,481.7L544.2,480.0" stroke="#00e5ee" stroke-width="1.3" fill="none"/>
<path d="M557.5,471.2L577.9,485.7 M577.9,485.7L571.9,494.4 M575.0,483.6L571.7,488.3" stroke="#00e070" stroke-width="1.3" fill="none"/>
<path d="M557.5,484.4L579.3,496.7 M579.3,496.7L574.2,506.0 M576.1,494.9L573.4,499.9" stroke="#00ee66" stroke-width="1.3" fill="none"/>
<path d="M557.5,496.3L580.0,507.1 M580.0,507.1L575.6,516.8 M576.8,505.6L572.4,515.2" stroke="#00ee44" stroke-width="1.3" fill="none"/>
<path d="M557.5,507.8L580.7,517.1 M580.7,517.1L577.0,527.0 M577.4,515.7L573.6,525.6 M574.0,514.4L572.0,519.7" stroke="#10ee10" stroke-width="1.3" fill="none"/>
<path d="M557.5,519.1L580.8,528.1 M580.8,528.1L577.2,538.1 M577.5,526.8L573.8,536.8 M574.1,525.5L572.1,530.9" stroke="#44ee00" stroke-width="1.3" fill="none"/>
<path d="M557.5,529.4L581.0,537.8 M581.0,537.8L577.7,547.9 M577.6,536.6L574.3,546.7 M574.3,535.4L570.9,545.4" stroke="#66ee00" stroke-width="1.3" fill="none"/>
<path d="M557.5,539.7L580.9,548.5 M580.9,548.5L577.4,558.5 M577.5,547.2L574.0,557.2 M574.2,545.9L570.6,555.9" stroke="#99ee00" stroke-width="1.3" fill="none"/>
<path d="M557.5,549.1L581.3,556.8 M581.3,556.8L578.2,567.0 M577.9,555.7L574.8,565.9 M574.4,554.6L571.3,564.7" stroke="#aaee00" stroke-width="1.3" fill="none"/>
<path d="M557.5,558.4L582.1,562.7 M582.1,562.7L580.5,573.2 M578.6,562.1L576.9,572.6" stroke="#00ee55" stroke-width="1.3" fill="none"/>
<g shape-rendering="crispEdges">
<line x1="598.0" y1="26.0" x2="598.0" y2="564.0" stroke="#643820" stroke-width="2" stroke-dasharray="4 2"/>
<line x1="607.0" y1="26.0" x2="607.0" y2="564.0" stroke="#643820" stroke-width="2" stroke-dasharray="4 2"/>
<line x1="615.7" y1="26.0" x2="615.7" y2="564.0" stroke="#643820" stroke-width="2" stroke-dasharray="4 2"/>
<line x1="624.4" y1="26.0" x2="624.4" y2="564.0" stroke="#643820" stroke-width="2" stroke-dasharray="4 2"/>
<line x1="633.3" y1="26.0" x2="633.3" y2="564.0" stroke="#643820" stroke-width="2" stroke-dasharray="4 2"/>
<line x1="642.2" y1="26.0" x2="642.2" y2="564.0" stroke="#643820" stroke-width="2" stroke-dasharray="4 2"/>
<line x1="591.0" y1="24.0" x2="598.0" y2="24.0" stroke="#00f4f4" stroke-width="2"/>
<line x1="591.0" y1="117.0" x2="597.0" y2="117.0" stroke="#00f4f4" stroke-width="2"/>
<line x1="591.0" y1="183.0" x2="597.0" y2="183.0" stroke="#00f4f4" stroke-width="2"/>
<line x1="591.0" y1="205.0" x2="598.0" y2="205.0" stroke="#00f4f4" stroke-width="2"/>
<line x1="591.0" y1="234.0" x2="598.0" y2="234.0" stroke="#00f4f4" stroke-width="2"/>
<line x1="591.0" y1="242.0" x2="600.0" y2="242.0" stroke="#00f4f4" stroke-width="2"/>
<line x1="591.0" y1="257.0" x2="600.0" y2="257.0" stroke="#00f4f4" stroke-width="2"/>
<line x1="591.0" y1="276.0" x2="597.0" y2="276.0" stroke="#f0f000" stroke-width="2"/>
<line x1="591.0" y1="291.0" x2="596.0" y2="291.0" stroke="#f0f000" stroke-width="2"/>
<line x1="591.0" y1="316.0" x2="594.0" y2="316.0" stroke="#f0f000" stroke-width="2"/>
<line x1="591.0" y1="342.0" x2="596.0" y2="342.0" stroke="#f0f000" stroke-width="2"/>
<line x1="591.0" y1="348.0" x2="597.0" y2="348.0" stroke="#f0f000" stroke-width="2"/>
<line x1="591.0" y1="394.0" x2="599.0" y2="394.0" stroke="#00e000" stroke-width="2"/>
<line x1="591.0" y1="457.0" x2="592.0" y2="457.0" stroke="#00e000" stroke-width="2"/>
<line x1="591.0" y1="460.0" x2="593.0" y2="460.0" stroke="#00e000" stroke-width="2"/>
<line x1="591.0" y1="471.0" x2="596.0" y2="471.0" stroke="#f00000" stroke-width="2"/>
<line x1="591.0" y1="516.0" x2="600.0" y2="516.0" stroke="#f00000" stroke-width="2"/>
<line x1="591.0" y1="535.0" x2="604.0" y2="535.0" stroke="#f000f0" stroke-width="2"/>
<line x1="591.0" y1="539.0" x2="605.0" y2="539.0" stroke="#f000f0" stroke-width="2"/>
<line x1="591.0" y1="558.0" x2="598.0" y2="558.0" stroke="#f000f0" stroke-width="2"/>
<rect x="591.0" y="546.0" width="14.0" height="8.0" fill="#f000f0"/>
<line x1="590.0" y1="24.5" x2="693.0" y2="24.5" stroke="#fff" stroke-width="1"/>
<line x1="651.0" y1="24.0" x2="651.0" y2="566.0" stroke="#fff" stroke-width="2"/>
<line x1="590.0" y1="565.0" x2="693.0" y2="565.0" stroke="#fff" stroke-width="2"/>
</g>
<text x="593.0" y="33.8" font-size="8" fill="#fff" stroke="#fff" stroke-width="0.12" font-family='"DejaVu Sans", sans-serif' textLength="44" lengthAdjust="spacingAndGlyphs">Wind Speed</text>
<text x="593.0" y="43.6" font-size="8" fill="#fff" stroke="#fff" stroke-width="0.12" font-family='"DejaVu Sans", sans-serif' textLength="27" lengthAdjust="spacingAndGlyphs">(knots)</text>
<text x="605.5" y="578.5" font-size="10" fill="#fff" stroke="#fff" stroke-width="0.12" font-family='"Liberation Sans", sans-serif' text-anchor="middle">40</text>
<text x="623.5" y="578.5" font-size="10" fill="#fff" stroke="#fff" stroke-width="0.12" font-family='"Liberation Sans", sans-serif' text-anchor="middle">80</text>
<text x="640.7" y="578.5" font-size="10" fill="#fff" stroke="#fff" stroke-width="0.12" font-family='"Liberation Sans", sans-serif' text-anchor="middle">120</text>
<text x="654.0" y="33.8" font-size="8" fill="#fff" stroke="#fff" stroke-width="0.12" font-family='"DejaVu Sans", sans-serif' textLength="36" lengthAdjust="spacingAndGlyphs">Inf. Temp.</text>
<text x="654.0" y="43.6" font-size="8" fill="#fff" stroke="#fff" stroke-width="0.12" font-family='"DejaVu Sans", sans-serif' textLength="30" lengthAdjust="spacingAndGlyphs">Adv. (C/</text>
<text x="654.0" y="53.4" font-size="8" fill="#fff" stroke="#fff" stroke-width="0.12" font-family='"DejaVu Sans", sans-serif'>hr)</text>
<g shape-rendering="crispEdges">
<line x1="670.5" y1="26.0" x2="670.5" y2="564.0" stroke="#909090" stroke-width="1" stroke-dasharray="3 2"/>
<rect x="671.0" y="69.0" width="2.6" height="225.0" fill="#f00000"/>
<rect x="669.5" y="293.6" width="3.0" height="62.0" fill="#3a96d8"/>
<rect x="669.5" y="355.0" width="2.0" height="50.0" fill="#3a96d8"/>
<rect x="671.0" y="404.8" width="1.6" height="39.0" fill="#f00000"/>
<rect x="671.0" y="443.6" width="2.6" height="65.0" fill="#f00000"/>
<rect x="671.0" y="508.0" width="1.0" height="27.0" fill="#f00000"/>
<rect x="671.5" y="535.5" width="3.5" height="23.0" fill="none" stroke="#f00000" stroke-width="1"/>
</g>
<text x="676.0" y="145.0" font-size="8" fill="#f00" stroke="#f00" stroke-width="0.12" font-family='"DejaVu Sans", sans-serif' textLength="11.5" lengthAdjust="spacingAndGlyphs">0.4</text>
<text x="676.0" y="257.1" font-size="8" fill="#f00" stroke="#f00" stroke-width="0.12" font-family='"DejaVu Sans", sans-serif' textLength="11.5" lengthAdjust="spacingAndGlyphs">0.3</text>
<text x="653.0" y="331.2" font-size="8" fill="#3a96d8" stroke="#3a96d8" stroke-width="0.12" font-family='"DejaVu Sans", sans-serif' textLength="15.5" lengthAdjust="spacingAndGlyphs">-0.6</text>
<text x="653.0" y="386.3" font-size="8" fill="#3a96d8" stroke="#3a96d8" stroke-width="0.12" font-family='"DejaVu Sans", sans-serif' textLength="15.5" lengthAdjust="spacingAndGlyphs">-0.3</text>
<text x="676.0" y="430.8" font-size="8" fill="#f00" stroke="#f00" stroke-width="0.12" font-family='"DejaVu Sans", sans-serif' textLength="11.5" lengthAdjust="spacingAndGlyphs">0.3</text>
<text x="676.0" y="467.7" font-size="8" fill="#f00" stroke="#f00" stroke-width="0.12" font-family='"DejaVu Sans", sans-serif' textLength="11.5" lengthAdjust="spacingAndGlyphs">0.6</text>
<text x="676.0" y="499.8" font-size="8" fill="#f00" stroke="#f00" stroke-width="0.12" font-family='"DejaVu Sans", sans-serif' textLength="11.5" lengthAdjust="spacingAndGlyphs">0.4</text>
<text x="676.0" y="527.8" font-size="8" fill="#f00" stroke="#f00" stroke-width="0.12" font-family='"DejaVu Sans", sans-serif' textLength="11.5" lengthAdjust="spacingAndGlyphs">0.2</text>
<text x="676.0" y="553.3" font-size="8" fill="#f00" stroke="#f00" stroke-width="0.12" font-family='"DejaVu Sans", sans-serif' textLength="11.5" lengthAdjust="spacingAndGlyphs">1.8</text>
<defs><clipPath id="hc"><rect x="694" y="26" width="484" height="405"/></clipPath></defs>
<g clip-path="url(#hc)">
<circle cx="934.8" cy="228.0" r="30.3" fill="none" stroke="#606060" stroke-width="1" stroke-dasharray="5 3.2"/>
<circle cx="934.8" cy="228.0" r="60.7" fill="none" stroke="#606060" stroke-width="1" stroke-dasharray="5 3.2"/>
<circle cx="934.8" cy="228.0" r="91.0" fill="none" stroke="#606060" stroke-width="1" stroke-dasharray="5 3.2"/>
<circle cx="934.8" cy="228.0" r="121.4" fill="none" stroke="#606060" stroke-width="1" stroke-dasharray="5 3.2"/>
<circle cx="934.8" cy="228.0" r="151.7" fill="none" stroke="#606060" stroke-width="1" stroke-dasharray="5 3.2"/>
<circle cx="934.8" cy="228.0" r="182.0" fill="none" stroke="#606060" stroke-width="1" stroke-dasharray="5 3.2"/>
<circle cx="934.8" cy="228.0" r="212.4" fill="none" stroke="#606060" stroke-width="1" stroke-dasharray="5 3.2"/>
<circle cx="934.8" cy="228.0" r="242.7" fill="none" stroke="#606060" stroke-width="1" stroke-dasharray="5 3.2"/>
<circle cx="934.8" cy="228.0" r="273.1" fill="none" stroke="#606060" stroke-width="1" stroke-dasharray="5 3.2"/>
<circle cx="934.8" cy="228.0" r="303.4" fill="none" stroke="#606060" stroke-width="1" stroke-dasharray="5 3.2"/>
<circle cx="934.8" cy="228.0" r="333.7" fill="none" stroke="#606060" stroke-width="1" stroke-dasharray="5 3.2"/>
<circle cx="934.8" cy="228.0" r="364.1" fill="none" stroke="#606060" stroke-width="1" stroke-dasharray="5 3.2"/>
<line x1="694.0" y1="228.0" x2="1178.0" y2="228.0" stroke="#7c7c7c" stroke-width="1.4" stroke-dasharray="3.6 2.4"/>
<line x1="934.8" y1="26.0" x2="934.8" y2="431.0" stroke="#7c7c7c" stroke-width="1.4" stroke-dasharray="3.6 2.4"/>
<text x="906.5" y="244.9" font-size="10" fill="#fff" stroke="#fff" stroke-width="0.12" font-family='"Liberation Sans", sans-serif' text-anchor="middle">10</text>
<text x="967.1" y="244.9" font-size="10" fill="#fff" stroke="#fff" stroke-width="0.12" font-family='"Liberation Sans", sans-serif' text-anchor="middle">10</text>
<text x="876.1" y="244.9" font-size="10" fill="#fff" stroke="#fff" stroke-width="0.12" font-family='"Liberation Sans", sans-serif' text-anchor="middle">20</text>
<text x="997.5" y="244.9" font-size="10" fill="#fff" stroke="#fff" stroke-width="0.12" font-family='"Liberation Sans", sans-serif' text-anchor="middle">20</text>
<text x="845.8" y="244.9" font-size="10" fill="#fff" stroke="#fff" stroke-width="0.12" font-family='"Liberation Sans", sans-serif' text-anchor="middle">30</text>
<text x="1027.8" y="244.9" font-size="10" fill="#fff" stroke="#fff" stroke-width="0.12" font-family='"Liberation Sans", sans-serif' text-anchor="middle">30</text>
<text x="815.4" y="244.9" font-size="10" fill="#fff" stroke="#fff" stroke-width="0.12" font-family='"Liberation Sans", sans-serif' text-anchor="middle">40</text>
<text x="1058.2" y="244.9" font-size="10" fill="#fff" stroke="#fff" stroke-width="0.12" font-family='"Liberation Sans", sans-serif' text-anchor="middle">40</text>
<text x="785.1" y="244.9" font-size="10" fill="#fff" stroke="#fff" stroke-width="0.12" font-family='"Liberation Sans", sans-serif' text-anchor="middle">50</text>
<text x="1088.5" y="244.9" font-size="10" fill="#fff" stroke="#fff" stroke-width="0.12" font-family='"Liberation Sans", sans-serif' text-anchor="middle">50</text>
<text x="754.8" y="244.9" font-size="10" fill="#fff" stroke="#fff" stroke-width="0.12" font-family='"Liberation Sans", sans-serif' text-anchor="middle">60</text>
<text x="1118.8" y="244.9" font-size="10" fill="#fff" stroke="#fff" stroke-width="0.12" font-family='"Liberation Sans", sans-serif' text-anchor="middle">60</text>
<text x="724.4" y="244.9" font-size="10" fill="#fff" stroke="#fff" stroke-width="0.12" font-family='"Liberation Sans", sans-serif' text-anchor="middle">70</text>
<text x="1149.2" y="244.9" font-size="10" fill="#fff" stroke="#fff" stroke-width="0.12" font-family='"Liberation Sans", sans-serif' text-anchor="middle">70</text>
<text x="694.1" y="244.9" font-size="10" fill="#fff" stroke="#fff" stroke-width="0.12" font-family='"Liberation Sans", sans-serif' text-anchor="middle">80</text>
<text x="1179.5" y="244.9" font-size="10" fill="#fff" stroke="#fff" stroke-width="0.12" font-family='"Liberation Sans", sans-serif' text-anchor="middle">80</text>
<text x="942.0" y="204.3" font-size="10" fill="#fff" stroke="#fff" stroke-width="0.12" font-family='"Liberation Sans", sans-serif'>10</text>
<text x="942.0" y="264.9" font-size="10" fill="#fff" stroke="#fff" stroke-width="0.12" font-family='"Liberation Sans", sans-serif'>10</text>
<text x="942.0" y="173.9" font-size="10" fill="#fff" stroke="#fff" stroke-width="0.12" font-family='"Liberation Sans", sans-serif'>20</text>
<text x="942.0" y="295.3" font-size="10" fill="#fff" stroke="#fff" stroke-width="0.12" font-family='"Liberation Sans", sans-serif'>20</text>
<text x="942.0" y="143.6" font-size="10" fill="#fff" stroke="#fff" stroke-width="0.12" font-family='"Liberation Sans", sans-serif'>30</text>
<text x="942.0" y="325.6" font-size="10" fill="#fff" stroke="#fff" stroke-width="0.12" font-family='"Liberation Sans", sans-serif'>30</text>
<text x="942.0" y="113.2" font-size="10" fill="#fff" stroke="#fff" stroke-width="0.12" font-family='"Liberation Sans", sans-serif'>40</text>
<text x="942.0" y="356.0" font-size="10" fill="#fff" stroke="#fff" stroke-width="0.12" font-family='"Liberation Sans", sans-serif'>40</text>
<text x="942.0" y="82.9" font-size="10" fill="#fff" stroke="#fff" stroke-width="0.12" font-family='"Liberation Sans", sans-serif'>50</text>
<text x="942.0" y="386.3" font-size="10" fill="#fff" stroke="#fff" stroke-width="0.12" font-family='"Liberation Sans", sans-serif'>50</text>
<text x="942.0" y="52.6" font-size="10" fill="#fff" stroke="#fff" stroke-width="0.12" font-family='"Liberation Sans", sans-serif'>60</text>
<text x="942.0" y="416.6" font-size="10" fill="#fff" stroke="#fff" stroke-width="0.12" font-family='"Liberation Sans", sans-serif'>60</text>
<text x="942.0" y="22.2" font-size="10" fill="#fff" stroke="#fff" stroke-width="0.12" font-family='"Liberation Sans", sans-serif'>70</text>
<text x="942.0" y="447.0" font-size="10" fill="#fff" stroke="#fff" stroke-width="0.12" font-family='"Liberation Sans", sans-serif'>70</text>
<polyline points="882.3,218.6 839.5,211.1 836.9,205.7 834.3,202.5 835.5,198.8 841.2,193.3 854.1,198.2" fill="none" stroke="#f010f0" stroke-width="2"/>
<polyline points="854.3,198.3 872.1,204.8 901.8,204.8 906.9,205.8" fill="none" stroke="#f00000" stroke-width="2"/>
<polyline points="906.9,205.8 935.5,212.2 942.6,217.7 993.8,227.5" fill="none" stroke="#00e000" stroke-width="2"/>
<polyline points="993.8,227.5 968.2,211.5 914.0,194.8 911.0,186.0 911.0,177.8" fill="none" stroke="#f0f000" stroke-width="2"/>
<polyline points="911.0,177.8 912.0,165.1 924.3,165.1 917.7,176.4 944.7,180.5 954.9,187.4" fill="none" stroke="#00d8f0" stroke-width="2"/>
<circle cx="910" cy="166.6" r="3" fill="none" stroke="#1ea0d8" stroke-width="1"/>
<text x="915.0" y="182.0" font-size="10" fill="#1ea0d8" stroke="#1ea0d8" stroke-width="0.12" font-family='"Liberation Sans", sans-serif' textLength="49" lengthAdjust="spacingAndGlyphs">158/22 LM</text>
<circle cx="906.5" cy="255.5" r="3" fill="none" stroke="#e05a5a" stroke-width="1"/>
<text x="913.0" y="270.0" font-size="10" fill="#e86464" stroke="#e86464" stroke-width="0.12" font-family='"Liberation Sans", sans-serif' textLength="46" lengthAdjust="spacingAndGlyphs">47/13 RM</text>
<rect x="984.0" y="229.5" width="8.0" height="8.0" fill="none" stroke="#b8860b" stroke-width="2"/>
<text x="993.5" y="239.6" font-size="10" fill="#b8860b" stroke="#b8860b" stroke-width="0.12" font-family='"Liberation Sans", sans-serif' textLength="31" lengthAdjust="spacingAndGlyphs">267/17</text>
<path d="M1027.4,221.2l3.2,3.2l-3.2,3.2l-3.2,-3.2z M1024.3,236.8l3.2,3.2l-3.2,3.2l-3.2,-3.2z" fill="none" stroke="#fff" stroke-width="1.1"/>
<text x="1032.6" y="236.5" font-size="10" fill="#fff" stroke="#fff" stroke-width="0.12" font-family='"Liberation Sans", sans-serif' textLength="52" lengthAdjust="spacingAndGlyphs">DN=268/30</text>
<text x="1029.0" y="250.4" font-size="10" fill="#fff" stroke="#fff" stroke-width="0.12" font-family='"Liberation Sans", sans-serif' textLength="52" lengthAdjust="spacingAndGlyphs">UP=277/29</text>
</g>
<g shape-rendering="crispEdges">
<line x1="692.0" y1="24.5" x2="1179.0" y2="24.5" stroke="#fff" stroke-width="1"/>
<line x1="1178.5" y1="24.0" x2="1178.5" y2="566.0" stroke="#fff" stroke-width="1"/>
<line x1="692.4" y1="24.0" x2="692.4" y2="566.0" stroke="#fff" stroke-width="2"/>
<line x1="692.0" y1="432.0" x2="1179.0" y2="432.0" stroke="#fff" stroke-width="2"/>
<line x1="692.0" y1="565.0" x2="1179.0" y2="565.0" stroke="#fff" stroke-width="2"/>
<line x1="752.0" y1="433.0" x2="752.0" y2="564.0" stroke="#133866" stroke-width="2"/>
<line x1="694.0" y1="498.0" x2="813.0" y2="498.0" stroke="#133866" stroke-width="2"/>
<line x1="813.0" y1="432.0" x2="813.0" y2="566.0" stroke="#fff" stroke-width="2"/>
<line x1="935.0" y1="432.0" x2="935.0" y2="566.0" stroke="#fff" stroke-width="2"/>
<line x1="1057.0" y1="432.0" x2="1057.0" y2="566.0" stroke="#fff" stroke-width="2"/>
<line x1="1057.0" y1="452.5" x2="1179.0" y2="452.5" stroke="#fff" stroke-width="1"/>
</g>
<line x1="751.9" y1="498.2" x2="729.5" y2="519.0" stroke="#fff" stroke-width="2"/>
<text x="806.5" y="443.5" font-size="10" fill="#fff" stroke="#fff" stroke-width="0.12" font-family='"Liberation Sans", sans-serif' text-anchor="end">-- deg</text>
<text x="697.6" y="561.8" font-size="10" fill="#fff" stroke="#fff" stroke-width="0.12" font-family='"Liberation Sans", sans-serif' textLength="57.5" lengthAdjust="spacingAndGlyphs">Storm Slinky</text>
<g shape-rendering="crispEdges">
<line x1="818.0" y1="433.0" x2="818.0" y2="437.5" stroke="#7c7c7c" stroke-width="2"/>
<line x1="818.0" y1="559.5" x2="818.0" y2="564.0" stroke="#7c7c7c" stroke-width="2"/>
<line x1="841.0" y1="433.0" x2="841.0" y2="437.5" stroke="#7c7c7c" stroke-width="2"/>
<line x1="841.0" y1="559.5" x2="841.0" y2="564.0" stroke="#7c7c7c" stroke-width="2"/>
<line x1="864.0" y1="433.0" x2="864.0" y2="437.5" stroke="#7c7c7c" stroke-width="2"/>
<line x1="864.0" y1="559.5" x2="864.0" y2="564.0" stroke="#7c7c7c" stroke-width="2"/>
<line x1="886.0" y1="433.0" x2="886.0" y2="437.5" stroke="#7c7c7c" stroke-width="2"/>
<line x1="886.0" y1="559.5" x2="886.0" y2="564.0" stroke="#7c7c7c" stroke-width="2"/>
<line x1="908.7" y1="433.0" x2="908.7" y2="437.5" stroke="#7c7c7c" stroke-width="2"/>
<line x1="908.7" y1="559.5" x2="908.7" y2="564.0" stroke="#7c7c7c" stroke-width="2"/>
<line x1="931.0" y1="433.0" x2="931.0" y2="437.5" stroke="#7c7c7c" stroke-width="2"/>
<line x1="931.0" y1="559.5" x2="931.0" y2="564.0" stroke="#7c7c7c" stroke-width="2"/>
<line x1="814.0" y1="452.8" x2="818.5" y2="452.8" stroke="#7c7c7c" stroke-width="2"/>
<line x1="814.0" y1="473.8" x2="818.5" y2="473.8" stroke="#7c7c7c" stroke-width="2"/>
<line x1="814.0" y1="494.9" x2="818.5" y2="494.9" stroke="#7c7c7c" stroke-width="2"/>
<line x1="814.0" y1="516.9" x2="818.5" y2="516.9" stroke="#7c7c7c" stroke-width="2"/>
<line x1="814.0" y1="537.9" x2="818.5" y2="537.9" stroke="#7c7c7c" stroke-width="2"/>
<line x1="814.0" y1="559.2" x2="818.5" y2="559.2" stroke="#7c7c7c" stroke-width="2"/>
</g>
<text x="819.5" y="455.8" font-size="8" fill="#fff" stroke="#fff" stroke-width="0.12" font-family='"DejaVu Sans", sans-serif' textLength="14.5" lengthAdjust="spacingAndGlyphs">500</text>
<text x="819.5" y="476.8" font-size="8" fill="#fff" stroke="#fff" stroke-width="0.12" font-family='"DejaVu Sans", sans-serif' textLength="14.5" lengthAdjust="spacingAndGlyphs">600</text>
<text x="819.5" y="497.9" font-size="8" fill="#fff" stroke="#fff" stroke-width="0.12" font-family='"DejaVu Sans", sans-serif' textLength="14.5" lengthAdjust="spacingAndGlyphs">700</text>
<text x="819.5" y="519.9" font-size="8" fill="#fff" stroke="#fff" stroke-width="0.12" font-family='"DejaVu Sans", sans-serif' textLength="14.5" lengthAdjust="spacingAndGlyphs">800</text>
<text x="819.5" y="540.9" font-size="8" fill="#fff" stroke="#fff" stroke-width="0.12" font-family='"DejaVu Sans", sans-serif' textLength="14.5" lengthAdjust="spacingAndGlyphs">900</text>
<text x="814.5" y="562.0" font-size="8" fill="#fff" stroke="#fff" stroke-width="0.12" font-family='"DejaVu Sans", sans-serif' textLength="19" lengthAdjust="spacingAndGlyphs">1000</text>
<text x="826.2" y="558.0" font-size="8" fill="#fff" stroke="#fff" stroke-width="0.12" font-family='"DejaVu Sans", sans-serif' text-anchor="middle" textLength="14.5" lengthAdjust="spacingAndGlyphs">250</text>
<text x="849.0" y="558.0" font-size="8" fill="#fff" stroke="#fff" stroke-width="0.12" font-family='"DejaVu Sans", sans-serif' text-anchor="middle" textLength="14.5" lengthAdjust="spacingAndGlyphs">260</text>
<text x="871.8" y="558.0" font-size="8" fill="#fff" stroke="#fff" stroke-width="0.12" font-family='"DejaVu Sans", sans-serif' text-anchor="middle" textLength="14.5" lengthAdjust="spacingAndGlyphs">270</text>
<text x="894.0" y="558.0" font-size="8" fill="#fff" stroke="#fff" stroke-width="0.12" font-family='"DejaVu Sans", sans-serif' text-anchor="middle" textLength="14.5" lengthAdjust="spacingAndGlyphs">280</text>
<text x="917.0" y="558.0" font-size="8" fill="#fff" stroke="#fff" stroke-width="0.12" font-family='"DejaVu Sans", sans-serif' text-anchor="middle" textLength="14.5" lengthAdjust="spacingAndGlyphs">290</text>
<text x="873.0" y="464.7" font-size="8" fill="#fff" stroke="#fff" stroke-width="0.12" font-family='"DejaVu Sans", sans-serif' text-anchor="middle" textLength="28" lengthAdjust="spacingAndGlyphs">Theta-E</text>
<text x="873.0" y="474.9" font-size="8" fill="#fff" stroke="#fff" stroke-width="0.12" font-family='"DejaVu Sans", sans-serif' text-anchor="middle">v.</text>
<text x="873.0" y="484.7" font-size="8" fill="#fff" stroke="#fff" stroke-width="0.12" font-family='"DejaVu Sans", sans-serif' text-anchor="middle" textLength="16" lengthAdjust="spacingAndGlyphs">Pres</text>
<defs><clipPath id="tc"><rect x="814" y="433" width="120" height="131"/></clipPath></defs>
<polyline points="923.9,432.6 908.7,485.8 905.5,488.6 902.2,494.5 882.6,546.0 875.0,553.1 869.6,556.0 842.5,558.6 834.9,564.0" fill="none" stroke="#f0f000" stroke-width="2" clip-path="url(#tc)"/>
<g shape-rendering="crispEdges">
<line x1="951.0" y1="433.0" x2="951.0" y2="437.5" stroke="#7c7c7c" stroke-width="2"/>
<line x1="951.0" y1="559.5" x2="951.0" y2="564.0" stroke="#7c7c7c" stroke-width="2"/>
<line x1="967.5" y1="433.0" x2="967.5" y2="437.5" stroke="#7c7c7c" stroke-width="2"/>
<line x1="967.5" y1="559.5" x2="967.5" y2="564.0" stroke="#7c7c7c" stroke-width="2"/>
<line x1="984.0" y1="433.0" x2="984.0" y2="437.5" stroke="#7c7c7c" stroke-width="2"/>
<line x1="984.0" y1="559.5" x2="984.0" y2="564.0" stroke="#7c7c7c" stroke-width="2"/>
<line x1="1001.0" y1="433.0" x2="1001.0" y2="437.5" stroke="#7c7c7c" stroke-width="2"/>
<line x1="1001.0" y1="559.5" x2="1001.0" y2="564.0" stroke="#7c7c7c" stroke-width="2"/>
<line x1="1018.0" y1="433.0" x2="1018.0" y2="437.5" stroke="#7c7c7c" stroke-width="2"/>
<line x1="1018.0" y1="559.5" x2="1018.0" y2="564.0" stroke="#7c7c7c" stroke-width="2"/>
<line x1="1034.3" y1="433.0" x2="1034.3" y2="437.5" stroke="#7c7c7c" stroke-width="2"/>
<line x1="1034.3" y1="559.5" x2="1034.3" y2="564.0" stroke="#7c7c7c" stroke-width="2"/>
<line x1="1051.0" y1="433.0" x2="1051.0" y2="437.5" stroke="#7c7c7c" stroke-width="2"/>
<line x1="1051.0" y1="559.5" x2="1051.0" y2="564.0" stroke="#7c7c7c" stroke-width="2"/>
<line x1="936.0" y1="562.5" x2="940.7" y2="562.5" stroke="#7c7c7c" stroke-width="2"/>
<line x1="1051.5" y1="562.5" x2="1056.0" y2="562.5" stroke="#7c7c7c" stroke-width="2"/>
<line x1="936.0" y1="546.0" x2="940.7" y2="546.0" stroke="#7c7c7c" stroke-width="2"/>
<line x1="1051.5" y1="546.0" x2="1056.0" y2="546.0" stroke="#7c7c7c" stroke-width="2"/>
<line x1="936.0" y1="529.4" x2="940.7" y2="529.4" stroke="#7c7c7c" stroke-width="2"/>
<line x1="1051.5" y1="529.4" x2="1056.0" y2="529.4" stroke="#7c7c7c" stroke-width="2"/>
<line x1="936.0" y1="512.9" x2="940.7" y2="512.9" stroke="#7c7c7c" stroke-width="2"/>
<line x1="1051.5" y1="512.9" x2="1056.0" y2="512.9" stroke="#7c7c7c" stroke-width="2"/>
<line x1="936.0" y1="496.3" x2="940.7" y2="496.3" stroke="#7c7c7c" stroke-width="2"/>
<line x1="1051.5" y1="496.3" x2="1056.0" y2="496.3" stroke="#7c7c7c" stroke-width="2"/>
<line x1="936.0" y1="479.8" x2="940.7" y2="479.8" stroke="#7c7c7c" stroke-width="2"/>
<line x1="1051.5" y1="479.8" x2="1056.0" y2="479.8" stroke="#7c7c7c" stroke-width="2"/>
<line x1="936.0" y1="463.3" x2="940.7" y2="463.3" stroke="#7c7c7c" stroke-width="2"/>
<line x1="1051.5" y1="463.3" x2="1056.0" y2="463.3" stroke="#7c7c7c" stroke-width="2"/>
<line x1="936.0" y1="446.7" x2="940.7" y2="446.7" stroke="#7c7c7c" stroke-width="2"/>
<line x1="1051.5" y1="446.7" x2="1056.0" y2="446.7" stroke="#7c7c7c" stroke-width="2"/>
<line x1="959.0" y1="433.0" x2="959.0" y2="564.0" stroke="#707070" stroke-width="2" stroke-dasharray="4 2"/>
<line x1="1001.0" y1="433.0" x2="1001.0" y2="496.0" stroke="#581058" stroke-width="2" stroke-dasharray="4 2"/>
<line x1="1051.0" y1="433.0" x2="1051.0" y2="496.0" stroke="#581058" stroke-width="2" stroke-dasharray="4 2"/>
</g>
<text x="955.5" y="549.2" font-size="8" fill="#fff" stroke="#fff" stroke-width="0.12" font-family='"DejaVu Sans", sans-serif' text-anchor="end">2</text>
<text x="955.5" y="532.6" font-size="8" fill="#fff" stroke="#fff" stroke-width="0.12" font-family='"DejaVu Sans", sans-serif' text-anchor="end">4</text>
<text x="955.5" y="516.1" font-size="8" fill="#fff" stroke="#fff" stroke-width="0.12" font-family='"DejaVu Sans", sans-serif' text-anchor="end">6</text>
<text x="955.5" y="499.5" font-size="8" fill="#fff" stroke="#fff" stroke-width="0.12" font-family='"DejaVu Sans", sans-serif' text-anchor="end">8</text>
<text x="955.5" y="483.0" font-size="8" fill="#fff" stroke="#fff" stroke-width="0.12" font-family='"DejaVu Sans", sans-serif' text-anchor="end">10</text>
<text x="955.5" y="466.5" font-size="8" fill="#fff" stroke="#fff" stroke-width="0.12" font-family='"DejaVu Sans", sans-serif' text-anchor="end">12</text>
<text x="955.5" y="449.9" font-size="8" fill="#fff" stroke="#fff" stroke-width="0.12" font-family='"DejaVu Sans", sans-serif' text-anchor="end">14</text>
<text x="973.5" y="447.5" font-size="8" fill="#fff" stroke="#fff" stroke-width="0.12" font-family='"DejaVu Sans", sans-serif' text-anchor="middle" textLength="31" lengthAdjust="spacingAndGlyphs">SR Wind</text>
<text x="973.5" y="457.5" font-size="8" fill="#fff" stroke="#fff" stroke-width="0.12" font-family='"DejaVu Sans", sans-serif' text-anchor="middle">v.</text>
<text x="973.5" y="467.4" font-size="8" fill="#fff" stroke="#fff" stroke-width="0.12" font-family='"DejaVu Sans", sans-serif' text-anchor="middle" textLength="25" lengthAdjust="spacingAndGlyphs">Height</text>
<text x="1021.8" y="457.2" font-size="8" fill="#c410c4" stroke="#c410c4" stroke-width="0.12" font-family='"DejaVu Sans", sans-serif' text-anchor="middle" textLength="26" lengthAdjust="spacingAndGlyphs">Classic</text>
<text x="1021.8" y="467.2" font-size="8" fill="#c410c4" stroke="#c410c4" stroke-width="0.12" font-family='"DejaVu Sans", sans-serif' text-anchor="middle" textLength="33" lengthAdjust="spacingAndGlyphs">Supercell</text>
<polyline points="986.1,432.1 983.6,451.8 980.0,469.7 978.6,472.0 979.5,479.5 984.3,481.7 985.0,484.3 981.7,486.1 971.8,488.8 967.4,492.7 967.4,497.1 972.9,504.8 983.9,517.0 977.3,523.6 966.3,530.2 961.4,535.7 961.9,543.4 967.4,551.1 983.9,557.1 983.9,559.9 974.0,561.0 959.2,561.7" fill="none" stroke="#f00000" stroke-width="2" stroke-linejoin="round"/>
<line x1="979.9" y1="470.2" x2="979.9" y2="488.3" stroke="#9932cc" stroke-width="2.5"/>
<line x1="977.1" y1="512.1" x2="977.1" y2="529.5" stroke="#6495ed" stroke-width="2"/>
<line x1="974.0" y1="545.2" x2="974.0" y2="563.2" stroke="#8b0000" stroke-width="2"/>
<text x="1117.6" y="446.8" font-size="10.5" fill="#fff" stroke="#fff" stroke-width="0.12" font-family='"Liberation Sans", sans-serif' text-anchor="middle" textLength="99.5" lengthAdjust="spacingAndGlyphs">Potential Hazard Type</text>
<text x="1117.8" y="508.7" font-size="15.8" fill="#ffc81e" font-family='"Liberation Sans", sans-serif' text-anchor="middle" textLength="38.4" lengthAdjust="spacingAndGlyphs">NONE</text>
<g shape-rendering="crispEdges">
<rect x="1.0" y="587.0" width="1178.0" height="3.0" fill="#3298d2"/>
<rect x="1.0" y="780.0" width="1178.0" height="2.0" fill="#3298d2"/>
<rect x="1.0" y="587.0" width="3.0" height="195.0" fill="#3298d2"/>
<rect x="1177.0" y="587.0" width="2.0" height="195.0" fill="#3298d2"/>
<line x1="297.5" y1="590.0" x2="297.5" y2="780.0" stroke="#3298d2" stroke-width="1"/>
<line x1="590.5" y1="590.0" x2="590.5" y2="780.0" stroke="#3298d2" stroke-width="1"/>
<line x1="884.5" y1="590.0" x2="884.5" y2="780.0" stroke="#3298d2" stroke-width="1"/>
<line x1="4.0" y1="601.5" x2="297.0" y2="601.5" stroke="#fff" stroke-width="1"/>
<line x1="4.0" y1="652.5" x2="297.0" y2="652.5" stroke="#fff" stroke-width="1"/>
<line x1="4.0" y1="723.5" x2="297.0" y2="723.5" stroke="#fff" stroke-width="1"/>
<line x1="205.5" y1="724.0" x2="205.5" y2="780.0" stroke="#fff" stroke-width="1"/>
<rect x="6.5" y="627.5" width="290.5" height="12.0" fill="none" stroke="#6b4423" stroke-width="1"/>
<line x1="298.0" y1="604.5" x2="590.0" y2="604.5" stroke="#fff" stroke-width="1"/>
<line x1="591.0" y1="614.5" x2="884.0" y2="614.5" stroke="#fff" stroke-width="1"/>
<line x1="738.5" y1="615.0" x2="738.5" y2="780.0" stroke="#fff" stroke-width="1"/>
</g>
<text x="40.3" y="601.3" font-size="10" fill="#fff" stroke="#fff" stroke-width="0.12" font-family='"Liberation Sans", sans-serif' text-anchor="middle">PCL</text>
<text x="76.1" y="601.3" font-size="10" fill="#fff" stroke="#fff" stroke-width="0.12" font-family='"Liberation Sans", sans-serif' text-anchor="middle">CAPE</text>
<text x="113.5" y="601.3" font-size="10" fill="#fff" stroke="#fff" stroke-width="0.12" font-family='"Liberation Sans", sans-serif' text-anchor="middle">CINH</text>
<text x="149.9" y="601.3" font-size="10" fill="#fff" stroke="#fff" stroke-width="0.12" font-family='"Liberation Sans", sans-serif' text-anchor="middle">LCL</text>
<text x="186.7" y="601.3" font-size="10" fill="#fff" stroke="#fff" stroke-width="0.12" font-family='"Liberation Sans", sans-serif' text-anchor="middle">LI</text>
<text x="222.7" y="601.3" font-size="10" fill="#fff" stroke="#fff" stroke-width="0.12" font-family='"Liberation Sans", sans-serif' text-anchor="middle">LFC</text>
<text x="260.1" y="601.3" font-size="10" fill="#fff" stroke="#fff" stroke-width="0.12" font-family='"Liberation Sans", sans-serif' text-anchor="middle">EL</text>
<text x="40.3" y="615.5" font-size="10" fill="#fff" stroke="#fff" stroke-width="0.12" font-family='"Liberation Sans", sans-serif' text-anchor="middle">SFC</text>
<text x="76.1" y="615.5" font-size="10" fill="#fff" stroke="#fff" stroke-width="0.12" font-family='"Liberation Sans", sans-serif' text-anchor="middle">0</text>
<text x="113.5" y="615.5" font-size="10" fill="#fff" stroke="#fff" stroke-width="0.12" font-family='"Liberation Sans", sans-serif' text-anchor="middle">0</text>
<text x="149.9" y="615.5" font-size="10" fill="#fff" stroke="#fff" stroke-width="0.12" font-family='"Liberation Sans", sans-serif' text-anchor="middle">222</text>
<text x="186.7" y="615.5" font-size="10" fill="#fff" stroke="#fff" stroke-width="0.12" font-family='"Liberation Sans", sans-serif' text-anchor="middle">29</text>
<text x="222.7" y="615.5" font-size="10" fill="#fff" stroke="#fff" stroke-width="0.12" font-family='"Liberation Sans", sans-serif' text-anchor="middle">--</text>
<text x="260.1" y="615.5" font-size="10" fill="#fff" stroke="#fff" stroke-width="0.12" font-family='"Liberation Sans", sans-serif' text-anchor="middle">222</text>
<text x="40.3" y="626.5" font-size="10" fill="#fff" stroke="#fff" stroke-width="0.12" font-family='"Liberation Sans", sans-serif' text-anchor="middle">EFF</text>
<text x="76.1" y="626.5" font-size="10" fill="#fff" stroke="#fff" stroke-width="0.12" font-family='"Liberation Sans", sans-serif' text-anchor="middle">0</text>
<text x="113.5" y="626.5" font-size="10" fill="#fff" stroke="#fff" stroke-width="0.12" font-family='"Liberation Sans", sans-serif' text-anchor="middle">0</text>
<text x="149.9" y="626.5" font-size="10" fill="#fff" stroke="#fff" stroke-width="0.12" font-family='"Liberation Sans", sans-serif' text-anchor="middle">222</text>
<text x="186.7" y="626.5" font-size="10" fill="#fff" stroke="#fff" stroke-width="0.12" font-family='"Liberation Sans", sans-serif' text-anchor="middle">29</text>
<text x="222.7" y="626.5" font-size="10" fill="#fff" stroke="#fff" stroke-width="0.12" font-family='"Liberation Sans", sans-serif' text-anchor="middle">--</text>
<text x="260.1" y="626.5" font-size="10" fill="#fff" stroke="#fff" stroke-width="0.12" font-family='"Liberation Sans", sans-serif' text-anchor="middle">222</text>
<text x="40.3" y="637.7" font-size="10" fill="#00e5ee" stroke="#00e5ee" stroke-width="0.12" font-family='"Liberation Sans", sans-serif' text-anchor="middle">ML</text>
<text x="76.1" y="637.7" font-size="10" fill="#fff" stroke="#fff" stroke-width="0.12" font-family='"Liberation Sans", sans-serif' text-anchor="middle">0</text>
<text x="113.5" y="637.7" font-size="10" fill="#fff" stroke="#fff" stroke-width="0.12" font-family='"Liberation Sans", sans-serif' text-anchor="middle">0</text>
<text x="149.9" y="637.7" font-size="10" fill="#fff" stroke="#fff" stroke-width="0.12" font-family='"Liberation Sans", sans-serif' text-anchor="middle">1694</text>
<text x="186.7" y="637.7" font-size="10" fill="#fff" stroke="#fff" stroke-width="0.12" font-family='"Liberation Sans", sans-serif' text-anchor="middle">20</text>
<text x="222.7" y="637.7" font-size="10" fill="#fff" stroke="#fff" stroke-width="0.12" font-family='"Liberation Sans", sans-serif' text-anchor="middle">--</text>
<text x="260.1" y="637.7" font-size="10" fill="#fff" stroke="#fff" stroke-width="0.12" font-family='"Liberation Sans", sans-serif' text-anchor="middle">1694</text>
<text x="40.3" y="648.6" font-size="10" fill="#fff" stroke="#fff" stroke-width="0.12" font-family='"Liberation Sans", sans-serif' text-anchor="middle">MU</text>
<text x="76.1" y="648.6" font-size="10" fill="#fff" stroke="#fff" stroke-width="0.12" font-family='"Liberation Sans", sans-serif' text-anchor="middle">0</text>
<text x="113.5" y="648.6" font-size="10" fill="#fff" stroke="#fff" stroke-width="0.12" font-family='"Liberation Sans", sans-serif' text-anchor="middle">0</text>
<text x="149.9" y="648.6" font-size="10" fill="#fff" stroke="#fff" stroke-width="0.12" font-family='"Liberation Sans", sans-serif' text-anchor="middle">5799</text>
<text x="186.7" y="648.6" font-size="10" fill="#fff" stroke="#fff" stroke-width="0.12" font-family='"Liberation Sans", sans-serif' text-anchor="middle">7</text>
<text x="222.7" y="648.6" font-size="10" fill="#fff" stroke="#fff" stroke-width="0.12" font-family='"Liberation Sans", sans-serif' text-anchor="middle">--</text>
<text x="260.1" y="648.6" font-size="10" fill="#fff" stroke="#fff" stroke-width="0.12" font-family='"Liberation Sans", sans-serif' text-anchor="middle">5799</text>
<text x="9.8" y="664.5" font-size="10" fill="#fff" stroke="#fff" stroke-width="0.12" font-family='"Liberation Sans", sans-serif'>PW = 0.07in</text>
<text x="106.7" y="664.5" font-size="10" fill="#fff" stroke="#fff" stroke-width="0.12" font-family='"Liberation Sans", sans-serif'>K = -29</text>
<text x="180.3" y="664.5" font-size="10" fill="#fff" stroke="#fff" stroke-width="0.12" font-family='"Liberation Sans", sans-serif'>WNDG = 0.0</text>
<text x="9.8" y="675.5" font-size="10" fill="#fff" stroke="#fff" stroke-width="0.12" font-family='"Liberation Sans", sans-serif'>MeanW = 0.8g/kg</text>
<text x="106.7" y="675.5" font-size="10" fill="#fff" stroke="#fff" stroke-width="0.12" font-family='"Liberation Sans", sans-serif'>TT = 30</text>
<text x="180.3" y="675.5" font-size="10" fill="#fff" stroke="#fff" stroke-width="0.12" font-family='"Liberation Sans", sans-serif'>TEI = 32</text>
<text x="9.8" y="686.5" font-size="10" fill="#fff" stroke="#fff" stroke-width="0.12" font-family='"Liberation Sans", sans-serif'>LowRH = 45%</text>
<text x="106.7" y="686.5" font-size="10" fill="#fff" stroke="#fff" stroke-width="0.12" font-family='"Liberation Sans", sans-serif'>ConvT = --F</text>
<text x="180.3" y="686.5" font-size="10" fill="#fff" stroke="#fff" stroke-width="0.12" font-family='"Liberation Sans", sans-serif'>3CAPE = 0</text>
<text x="9.8" y="697.5" font-size="10" fill="#fff" stroke="#fff" stroke-width="0.12" font-family='"Liberation Sans", sans-serif'>MidRH = 11%</text>
<text x="106.7" y="697.5" font-size="10" fill="#fff" stroke="#fff" stroke-width="0.12" font-family='"Liberation Sans", sans-serif'>maxT = 45F</text>
<text x="180.3" y="697.5" font-size="10" fill="#fff" stroke="#fff" stroke-width="0.12" font-family='"Liberation Sans", sans-serif'>MBURST = 0</text>
<text x="9.8" y="708.5" font-size="10" fill="#fff" stroke="#fff" stroke-width="0.12" font-family='"Liberation Sans", sans-serif'>DCAPE = -101</text>
<text x="106.7" y="708.5" font-size="10" fill="#fff" stroke="#fff" stroke-width="0.12" font-family='"Liberation Sans", sans-serif'>ESP = 0</text>
<text x="9.8" y="719.5" font-size="10" fill="#fff" stroke="#fff" stroke-width="0.12" font-family='"Liberation Sans", sans-serif'>DownT = 25F</text>
<text x="106.7" y="719.5" font-size="10" fill="#fff" stroke="#fff" stroke-width="0.12" font-family='"Liberation Sans", sans-serif'>MMP = 0.0</text>
<text x="180.3" y="719.5" font-size="10" fill="#fff" stroke="#fff" stroke-width="0.12" font-family='"Liberation Sans", sans-serif'>SigSvr = 0 m3/s3</text>
<text x="9.5" y="735.0" font-size="10" fill="#20e820" stroke="#20e820" stroke-width="0.12" font-family='"Liberation Sans", sans-serif' textLength="135.3" lengthAdjust="spacingAndGlyphs">Sfc-3km AGL LR = -0.5 C/km</text>
<text x="9.5" y="746.0" font-size="10" fill="#ff9a1a" stroke="#ff9a1a" stroke-width="0.12" font-family='"Liberation Sans", sans-serif' textLength="121" lengthAdjust="spacingAndGlyphs">3-6km AGL LR = 7.5 C/km</text>
<text x="9.5" y="757.0" font-size="10" fill="#f0f000" stroke="#f0f000" stroke-width="0.12" font-family='"Liberation Sans", sans-serif' textLength="122" lengthAdjust="spacingAndGlyphs">850-500mb LR = 6.8 C/km</text>
<text x="9.5" y="768.0" font-size="10" fill="#ff9a1a" stroke="#ff9a1a" stroke-width="0.12" font-family='"Liberation Sans", sans-serif' textLength="122" lengthAdjust="spacingAndGlyphs">700-500mb LR = 7.2 C/km</text>
<text x="210.2" y="735.0" font-size="10" fill="#fff" stroke="#fff" stroke-width="0.12" font-family='"Liberation Sans", sans-serif' textLength="65" lengthAdjust="spacingAndGlyphs">Supercell = 0.0</text>
<text x="210.2" y="746.0" font-size="10" fill="#fff" stroke="#fff" stroke-width="0.12" font-family='"Liberation Sans", sans-serif' textLength="67" lengthAdjust="spacingAndGlyphs">STP (cin) = 0.0</text>
<text x="210.2" y="757.0" font-size="10" fill="#fff" stroke="#fff" stroke-width="0.12" font-family='"Liberation Sans", sans-serif' textLength="66" lengthAdjust="spacingAndGlyphs">STP (fix) = 0.0</text>
<text x="210.2" y="768.0" font-size="10" fill="#fff" stroke="#fff" stroke-width="0.12" font-family='"Liberation Sans", sans-serif' textLength="49" lengthAdjust="spacingAndGlyphs">SHIP = 0.0</text>
<text x="416.0" y="602.3" font-size="10" fill="#fff" stroke="#fff" stroke-width="0.12" font-family='"Liberation Sans", sans-serif' text-anchor="end" textLength="61" lengthAdjust="spacingAndGlyphs">SRH (m2/s2)</text>
<text x="482.3" y="602.3" font-size="10" fill="#fff" stroke="#fff" stroke-width="0.12" font-family='"Liberation Sans", sans-serif' text-anchor="end" textLength="47" lengthAdjust="spacingAndGlyphs">Shear (kt)</text>
<text x="516.8" y="602.3" font-size="10" fill="#fff" stroke="#fff" stroke-width="0.12" font-family='"Liberation Sans", sans-serif' text-anchor="middle">MnWind</text>
<text x="570.2" y="602.3" font-size="10" fill="#fff" stroke="#fff" stroke-width="0.12" font-family='"Liberation Sans", sans-serif' text-anchor="middle">SRW</text>
<text x="303.8" y="615.8" font-size="10" fill="#fff" stroke="#fff" stroke-width="0.12" font-family='"Liberation Sans", sans-serif' textLength="42.5" lengthAdjust="spacingAndGlyphs">SFC-1km</text>
<text x="413.0" y="615.8" font-size="10" fill="#fff" stroke="#fff" stroke-width="0.12" font-family='"Liberation Sans", sans-serif' text-anchor="end">14</text>
<text x="472.5" y="615.8" font-size="10" fill="#fff" stroke="#fff" stroke-width="0.12" font-family='"Liberation Sans", sans-serif' text-anchor="end">11</text>
<text x="531.5" y="615.8" font-size="10" fill="#fff" stroke="#fff" stroke-width="0.12" font-family='"Liberation Sans", sans-serif' text-anchor="end" textLength="32" lengthAdjust="spacingAndGlyphs">106/31</text>
<text x="589.5" y="615.8" font-size="10" fill="#fff" stroke="#fff" stroke-width="0.12" font-family='"Liberation Sans", sans-serif' text-anchor="end" textLength="32" lengthAdjust="spacingAndGlyphs">131/27</text>
<text x="303.8" y="626.8" font-size="10" fill="#fff" stroke="#fff" stroke-width="0.12" font-family='"Liberation Sans", sans-serif' textLength="42.5" lengthAdjust="spacingAndGlyphs">SFC-3km</text>
<text x="413.0" y="626.8" font-size="10" fill="#fff" stroke="#fff" stroke-width="0.12" font-family='"Liberation Sans", sans-serif' text-anchor="end">83</text>
<text x="472.5" y="626.8" font-size="10" fill="#fff" stroke="#fff" stroke-width="0.12" font-family='"Liberation Sans", sans-serif' text-anchor="end">10</text>
<text x="531.5" y="626.8" font-size="10" fill="#fff" stroke="#fff" stroke-width="0.12" font-family='"Liberation Sans", sans-serif' text-anchor="end" textLength="32" lengthAdjust="spacingAndGlyphs">110/24</text>
<text x="589.5" y="626.8" font-size="10" fill="#fff" stroke="#fff" stroke-width="0.12" font-family='"Liberation Sans", sans-serif' text-anchor="end" textLength="32" lengthAdjust="spacingAndGlyphs">142/22</text>
<text x="303.8" y="637.8" font-size="10" fill="#fff" stroke="#fff" stroke-width="0.12" font-family='"Liberation Sans", sans-serif' textLength="73.2" lengthAdjust="spacingAndGlyphs">Eff Inflow Layer</text>
<text x="413.0" y="637.8" font-size="10" fill="#fff" stroke="#fff" stroke-width="0.12" font-family='"Liberation Sans", sans-serif' text-anchor="end">--</text>
<text x="472.5" y="637.8" font-size="10" fill="#fff" stroke="#fff" stroke-width="0.12" font-family='"Liberation Sans", sans-serif' text-anchor="end">--</text>
<text x="531.5" y="637.8" font-size="10" fill="#fff" stroke="#fff" stroke-width="0.12" font-family='"Liberation Sans", sans-serif' text-anchor="end" textLength="15.5" lengthAdjust="spacingAndGlyphs">--/--</text>
<text x="589.5" y="637.8" font-size="10" fill="#fff" stroke="#fff" stroke-width="0.12" font-family='"Liberation Sans", sans-serif' text-anchor="end" textLength="15.5" lengthAdjust="spacingAndGlyphs">--/--</text>
<text x="303.8" y="653.5" font-size="10" fill="#fff" stroke="#fff" stroke-width="0.12" font-family='"Liberation Sans", sans-serif' textLength="42.5" lengthAdjust="spacingAndGlyphs">SFC-6km</text>
<text x="472.5" y="653.5" font-size="10" fill="#fff" stroke="#fff" stroke-width="0.12" font-family='"Liberation Sans", sans-serif' text-anchor="end">34</text>
<text x="531.5" y="653.5" font-size="10" fill="#fff" stroke="#fff" stroke-width="0.12" font-family='"Liberation Sans", sans-serif' text-anchor="end" textLength="32" lengthAdjust="spacingAndGlyphs">117/14</text>
<text x="589.5" y="653.5" font-size="10" fill="#fff" stroke="#fff" stroke-width="0.12" font-family='"Liberation Sans", sans-serif' text-anchor="end" textLength="32" lengthAdjust="spacingAndGlyphs">169/15</text>
<text x="303.8" y="664.6" font-size="10" fill="#fff" stroke="#fff" stroke-width="0.12" font-family='"Liberation Sans", sans-serif' textLength="42.5" lengthAdjust="spacingAndGlyphs">SFC-8km</text>
<text x="472.5" y="664.6" font-size="10" fill="#fff" stroke="#fff" stroke-width="0.12" font-family='"Liberation Sans", sans-serif' text-anchor="end">17</text>
<text x="531.5" y="664.6" font-size="10" fill="#fff" stroke="#fff" stroke-width="0.12" font-family='"Liberation Sans", sans-serif' text-anchor="end" textLength="32" lengthAdjust="spacingAndGlyphs">121/12</text>
<text x="589.5" y="664.6" font-size="10" fill="#fff" stroke="#fff" stroke-width="0.12" font-family='"Liberation Sans", sans-serif' text-anchor="end" textLength="32" lengthAdjust="spacingAndGlyphs">177/15</text>
<text x="303.8" y="675.7" font-size="10" fill="#c8860b" stroke="#c8860b" stroke-width="0.12" font-family='"Liberation Sans", sans-serif' textLength="102.7" lengthAdjust="spacingAndGlyphs">LCL-EL (Cloud Layer)</text>
<text x="472.5" y="675.7" font-size="10" fill="#fff" stroke="#fff" stroke-width="0.12" font-family='"Liberation Sans", sans-serif' text-anchor="end">0</text>
<text x="531.5" y="675.7" font-size="10" fill="#c8860b" stroke="#c8860b" stroke-width="0.12" font-family='"Liberation Sans", sans-serif' text-anchor="end" textLength="32" lengthAdjust="spacingAndGlyphs">267/17</text>
<text x="589.5" y="675.7" font-size="10" fill="#fff" stroke="#fff" stroke-width="0.12" font-family='"Liberation Sans", sans-serif' text-anchor="end" textLength="32" lengthAdjust="spacingAndGlyphs">250/29</text>
<text x="303.8" y="686.7" font-size="10" fill="#fff" stroke="#fff" stroke-width="0.12" font-family='"Liberation Sans", sans-serif' textLength="87" lengthAdjust="spacingAndGlyphs">Eff Shear (EBWD)</text>
<text x="472.5" y="686.7" font-size="10" fill="#fff" stroke="#fff" stroke-width="0.12" font-family='"Liberation Sans", sans-serif' text-anchor="end">--</text>
<text x="531.5" y="686.7" font-size="10" fill="#fff" stroke="#fff" stroke-width="0.12" font-family='"Liberation Sans", sans-serif' text-anchor="end" textLength="15.5" lengthAdjust="spacingAndGlyphs">--/--</text>
<text x="589.5" y="686.7" font-size="10" fill="#fff" stroke="#fff" stroke-width="0.12" font-family='"Liberation Sans", sans-serif' text-anchor="end" textLength="15.5" lengthAdjust="spacingAndGlyphs">--/--</text>
<text x="303.8" y="703.0" font-size="10" fill="#fff" stroke="#fff" stroke-width="0.12" font-family='"Liberation Sans", sans-serif' textLength="58.5" lengthAdjust="spacingAndGlyphs">BRN Shear =</text>
<text x="472.5" y="703.0" font-size="10" fill="#fff" stroke="#fff" stroke-width="0.12" font-family='"Liberation Sans", sans-serif' text-anchor="end" textLength="42.4" lengthAdjust="spacingAndGlyphs">38 m2/s2</text>
<text x="303.8" y="714.2" font-size="10" fill="#fff" stroke="#fff" stroke-width="0.12" font-family='"Liberation Sans", sans-serif' textLength="78.6" lengthAdjust="spacingAndGlyphs">4-6km SR Wind =</text>
<text x="472.5" y="714.2" font-size="10" fill="#fff" stroke="#fff" stroke-width="0.12" font-family='"Liberation Sans", sans-serif' text-anchor="end" textLength="45" lengthAdjust="spacingAndGlyphs">243/23 kt</text>
<text x="303.8" y="729.8" font-size="10" fill="#fff" stroke="#fff" stroke-width="0.12" font-family='"Liberation Sans", sans-serif' textLength="121" lengthAdjust="spacingAndGlyphs">...Storm Motion Vectors...</text>
<text x="303.8" y="740.7" font-size="10" fill="#e86464" stroke="#e86464" stroke-width="0.12" font-family='"Liberation Sans", sans-serif' textLength="72" lengthAdjust="spacingAndGlyphs">Bunkers Right =</text>
<text x="472.5" y="740.7" font-size="10" fill="#e86464" stroke="#e86464" stroke-width="0.12" font-family='"Liberation Sans", sans-serif' text-anchor="end" textLength="38.3" lengthAdjust="spacingAndGlyphs">47/13 kt</text>
<text x="303.8" y="751.8" font-size="10" fill="#1e90d8" stroke="#1e90d8" stroke-width="0.12" font-family='"Liberation Sans", sans-serif' textLength="65.5" lengthAdjust="spacingAndGlyphs">Bunkers Left =</text>
<text x="472.5" y="751.8" font-size="10" fill="#1e90d8" stroke="#1e90d8" stroke-width="0.12" font-family='"Liberation Sans", sans-serif' text-anchor="end" textLength="44.4" lengthAdjust="spacingAndGlyphs">158/22 kt</text>
<text x="303.8" y="762.7" font-size="10" fill="#fff" stroke="#fff" stroke-width="0.12" font-family='"Liberation Sans", sans-serif' textLength="95" lengthAdjust="spacingAndGlyphs">Corfidi Downshear =</text>
<text x="472.5" y="762.7" font-size="10" fill="#fff" stroke="#fff" stroke-width="0.12" font-family='"Liberation Sans", sans-serif' text-anchor="end" textLength="45" lengthAdjust="spacingAndGlyphs">268/30 kt</text>
<text x="303.8" y="773.6" font-size="10" fill="#fff" stroke="#fff" stroke-width="0.12" font-family='"Liberation Sans", sans-serif' textLength="80.7" lengthAdjust="spacingAndGlyphs">Corfidi Upshear =</text>
<text x="472.5" y="773.6" font-size="10" fill="#fff" stroke="#fff" stroke-width="0.12" font-family='"Liberation Sans", sans-serif' text-anchor="end" textLength="45" lengthAdjust="spacingAndGlyphs">277/29 kt</text>
<text x="531.7" y="761.8" font-size="10" fill="#fff" stroke="#fff" stroke-width="0.12" font-family='"Liberation Sans", sans-serif' text-anchor="middle" textLength="74.5" lengthAdjust="spacingAndGlyphs">1km &amp; 6km AGL</text>
<text x="531.3" y="773.5" font-size="10" fill="#fff" stroke="#fff" stroke-width="0.12" font-family='"Liberation Sans", sans-serif' text-anchor="middle" textLength="52" lengthAdjust="spacingAndGlyphs">Wind Barbs</text>
<path d="M532.3,724.7L507.4,727.0 M507.4,727.0L506.2,716.5 M511.4,726.6L510.8,721.0" stroke="#20e040" stroke-width="1.2" fill="none"/>
<path d="M532.3,724.7L555.7,733.6 M555.7,733.6L552.1,743.6 M551.9,732.2L548.3,742.2 M548.2,730.8L544.6,740.7" stroke="#50ee00" stroke-width="1.2" fill="none"/>
<text x="737.5" y="606.6" font-size="16" fill="#fff" font-family='"Liberation Sans", sans-serif' text-anchor="middle" textLength="260" lengthAdjust="spacingAndGlyphs">SARS - Sounding Analogue System</text>
<text x="664.0" y="630.5" font-size="14" fill="#fff" font-family='"Liberation Sans", sans-serif' text-anchor="middle" textLength="82" lengthAdjust="spacingAndGlyphs">SUPERCELL</text>
<text x="811.3" y="630.5" font-size="14" fill="#fff" font-family='"Liberation Sans", sans-serif' text-anchor="middle" textLength="90" lengthAdjust="spacingAndGlyphs">SEVERE HAIL</text>
<text x="664.0" y="676.0" font-size="10" fill="#ffcc2c" font-family='"Liberation Sans", sans-serif' text-anchor="middle" textLength="88.5" lengthAdjust="spacingAndGlyphs" stroke="#ffcc2c" stroke-width="0.2">No Quality Matches</text>
<text x="811.3" y="676.0" font-size="10" fill="#ffcc2c" font-family='"Liberation Sans", sans-serif' text-anchor="middle" textLength="88.5" lengthAdjust="spacingAndGlyphs" stroke="#ffcc2c" stroke-width="0.2">No Quality Matches</text>
<text x="1030.8" y="603.3" font-size="12" fill="#fff" font-family='"Liberation Sans", sans-serif' text-anchor="middle" textLength="169" lengthAdjust="spacingAndGlyphs">Effective Layer STP (with CIN)</text>
<g shape-rendering="crispEdges">
<line x1="885.0" y1="749.0" x2="1177.0" y2="749.0" stroke="#2f2b2b" stroke-width="2" stroke-dasharray="4 2"/>
<line x1="885.0" y1="735.0" x2="1177.0" y2="735.0" stroke="#2f2b2b" stroke-width="2" stroke-dasharray="4 2"/>
<line x1="885.0" y1="721.0" x2="1177.0" y2="721.0" stroke="#2f2b2b" stroke-width="2" stroke-dasharray="4 2"/>
<line x1="885.0" y1="708.0" x2="1177.0" y2="708.0" stroke="#2f2b2b" stroke-width="2" stroke-dasharray="4 2"/>
<line x1="885.0" y1="694.0" x2="1177.0" y2="694.0" stroke="#2f2b2b" stroke-width="2" stroke-dasharray="4 2"/>
<line x1="885.0" y1="680.0" x2="1177.0" y2="680.0" stroke="#2f2b2b" stroke-width="2" stroke-dasharray="4 2"/>
<line x1="885.0" y1="666.0" x2="1177.0" y2="666.0" stroke="#2f2b2b" stroke-width="2" stroke-dasharray="4 2"/>
<line x1="885.0" y1="653.0" x2="1177.0" y2="653.0" stroke="#2f2b2b" stroke-width="2" stroke-dasharray="4 2"/>
<line x1="885.0" y1="639.0" x2="1177.0" y2="639.0" stroke="#2f2b2b" stroke-width="2" stroke-dasharray="4 2"/>
<line x1="885.0" y1="625.0" x2="1177.0" y2="625.0" stroke="#2f2b2b" stroke-width="2" stroke-dasharray="4 2"/>
<line x1="885.0" y1="611.0" x2="1177.0" y2="611.0" stroke="#2f2b2b" stroke-width="2" stroke-dasharray="4 2"/>
<line x1="885.0" y1="763.0" x2="1177.0" y2="763.0" stroke="#00d8d8" stroke-width="2"/>
</g>
<text x="894.6" y="766.7" font-size="10" fill="#fff" stroke="#fff" stroke-width="0.12" font-family='"Liberation Sans", sans-serif' text-anchor="middle">0</text>
<text x="894.6" y="752.9" font-size="10" fill="#fff" stroke="#fff" stroke-width="0.12" font-family='"Liberation Sans", sans-serif' text-anchor="middle">1</text>
<text x="894.6" y="739.2" font-size="10" fill="#fff" stroke="#fff" stroke-width="0.12" font-family='"Liberation Sans", sans-serif' text-anchor="middle">2</text>
<text x="894.6" y="725.4" font-size="10" fill="#fff" stroke="#fff" stroke-width="0.12" font-family='"Liberation Sans", sans-serif' text-anchor="middle">3</text>
<text x="894.6" y="711.6" font-size="10" fill="#fff" stroke="#fff" stroke-width="0.12" font-family='"Liberation Sans", sans-serif' text-anchor="middle">4</text>
<text x="894.6" y="697.8" font-size="10" fill="#fff" stroke="#fff" stroke-width="0.12" font-family='"Liberation Sans", sans-serif' text-anchor="middle">5</text>
<text x="894.6" y="684.1" font-size="10" fill="#fff" stroke="#fff" stroke-width="0.12" font-family='"Liberation Sans", sans-serif' text-anchor="middle">6</text>
<text x="894.6" y="670.3" font-size="10" fill="#fff" stroke="#fff" stroke-width="0.12" font-family='"Liberation Sans", sans-serif' text-anchor="middle">7</text>
<text x="894.6" y="656.5" font-size="10" fill="#fff" stroke="#fff" stroke-width="0.12" font-family='"Liberation Sans", sans-serif' text-anchor="middle">8</text>
<text x="894.6" y="642.8" font-size="10" fill="#fff" stroke="#fff" stroke-width="0.12" font-family='"Liberation Sans", sans-serif' text-anchor="middle">9</text>
<text x="894.6" y="629.0" font-size="10" fill="#fff" stroke="#fff" stroke-width="0.12" font-family='"Liberation Sans", sans-serif' text-anchor="middle">10</text>
<text x="894.6" y="615.2" font-size="10" fill="#fff" stroke="#fff" stroke-width="0.12" font-family='"Liberation Sans", sans-serif' text-anchor="middle">11</text>
<g shape-rendering="crispEdges">
<rect x="915.6" y="648.6" width="21.6" height="78.1" fill="none" stroke="#f020f0" stroke-width="2"/>
<line x1="915.6" y1="689.6" x2="937.2" y2="689.6" stroke="#f020f0" stroke-width="2"/>
<line x1="926.4" y1="610.9" x2="926.4" y2="648.6" stroke="#f020f0" stroke-width="2"/>
<line x1="926.4" y1="726.7" x2="926.4" y2="746.5" stroke="#f020f0" stroke-width="2"/>
<rect x="957.7" y="701.0" width="21.6" height="48.0" fill="none" stroke="#f00000" stroke-width="2"/>
<line x1="957.7" y1="729.4" x2="979.3" y2="729.4" stroke="#f00000" stroke-width="2"/>
<line x1="968.5" y1="645.9" x2="968.5" y2="701.0" stroke="#f00000" stroke-width="2"/>
<line x1="968.5" y1="749.0" x2="968.5" y2="760.6" stroke="#f00000" stroke-width="2"/>
<rect x="999.7" y="711.8" width="21.6" height="42.6" fill="none" stroke="#ff8c1a" stroke-width="2"/>
<line x1="999.7" y1="738.9" x2="1021.3" y2="738.9" stroke="#ff8c1a" stroke-width="2"/>
<line x1="1010.5" y1="685.5" x2="1010.5" y2="711.8" stroke="#ff8c1a" stroke-width="2"/>
<line x1="1010.5" y1="754.4" x2="1010.5" y2="762.0" stroke="#ff8c1a" stroke-width="2"/>
<rect x="1041.2" y="726.7" width="21.6" height="31.2" fill="none" stroke="#ffff00" stroke-width="2"/>
<line x1="1041.2" y1="745.7" x2="1062.8" y2="745.7" stroke="#ffff00" stroke-width="2"/>
<line x1="1052.0" y1="700.2" x2="1052.0" y2="726.7" stroke="#ffff00" stroke-width="2"/>
<line x1="1052.0" y1="757.9" x2="1052.0" y2="762.5" stroke="#ffff00" stroke-width="2"/>
<rect x="1083.2" y="734.9" width="21.6" height="26.3" fill="none" stroke="#ffff00" stroke-width="2"/>
<line x1="1083.2" y1="751.7" x2="1104.8" y2="751.7" stroke="#ffff00" stroke-width="2"/>
<line x1="1094.0" y1="711.3" x2="1094.0" y2="734.9" stroke="#ffff00" stroke-width="2"/>
<line x1="1094.0" y1="761.2" x2="1094.0" y2="762.0" stroke="#ffff00" stroke-width="2"/>
<rect x="1125.2" y="753.0" width="21.6" height="9.0" fill="none" stroke="#00f000" stroke-width="2"/>
<line x1="1125.2" y1="759.3" x2="1146.8" y2="759.3" stroke="#00f000" stroke-width="2"/>
<line x1="1136.0" y1="738.4" x2="1136.0" y2="753.0" stroke="#00f000" stroke-width="2"/>
<line x1="1136.0" y1="762.0" x2="1136.0" y2="762.0" stroke="#00f000" stroke-width="2"/>
</g>
<text x="926.4" y="775.5" font-size="10" fill="#fff" stroke="#fff" stroke-width="0.12" font-family='"Liberation Sans", sans-serif' text-anchor="middle">EF4+</text>
<text x="968.5" y="775.5" font-size="10" fill="#fff" stroke="#fff" stroke-width="0.12" font-family='"Liberation Sans", sans-serif' text-anchor="middle">EF3</text>
<text x="1010.5" y="775.5" font-size="10" fill="#fff" stroke="#fff" stroke-width="0.12" font-family='"Liberation Sans", sans-serif' text-anchor="middle">EF2</text>
<text x="1052.0" y="775.5" font-size="10" fill="#fff" stroke="#fff" stroke-width="0.12" font-family='"Liberation Sans", sans-serif' text-anchor="middle">EF1</text>
<text x="1094.0" y="775.5" font-size="10" fill="#fff" stroke="#fff" stroke-width="0.12" font-family='"Liberation Sans", sans-serif' text-anchor="middle">EF0</text>
<text x="1136.0" y="775.5" font-size="10" fill="#fff" stroke="#fff" stroke-width="0.12" font-family='"Liberation Sans", sans-serif' text-anchor="middle">NONTOR</text>
<rect x="1031.5" y="612.0" width="142.0" height="84.0" fill="#000" stroke="#fff" stroke-width="2" shape-rendering="crispEdges"/>
<line x1="1031.0" y1="625.0" x2="1174.0" y2="625.0" stroke="#fff" stroke-width="1.5" shape-rendering="crispEdges"/>
<text x="1034.5" y="623.8" font-size="10" fill="#fff" stroke="#fff" stroke-width="0.12" font-family='"Liberation Sans", sans-serif' textLength="124" lengthAdjust="spacingAndGlyphs">Prob EF2+ Given Supercell</text>
<text x="1033.6" y="636.1" font-size="10" fill="#fff" stroke="#fff" stroke-width="0.12" font-family='"Liberation Sans", sans-serif' textLength="74" lengthAdjust="spacingAndGlyphs">based on CAPE:</text>
<text x="1137.4" y="636.1" font-size="10" fill="#fff" stroke="#fff" stroke-width="0.12" font-family='"Liberation Sans", sans-serif' textLength="15" lengthAdjust="spacingAndGlyphs">0.0</text>
<text x="1033.6" y="647.0" font-size="10" fill="#00e000" stroke="#00e000" stroke-width="0.12" font-family='"Liberation Sans", sans-serif' textLength="67.8" lengthAdjust="spacingAndGlyphs">based on LCL:</text>
<text x="1137.4" y="647.0" font-size="10" fill="#00e000" stroke="#00e000" stroke-width="0.12" font-family='"Liberation Sans", sans-serif' textLength="20.9" lengthAdjust="spacingAndGlyphs">0.06</text>
<text x="1033.6" y="657.8" font-size="10" fill="#fff" stroke="#fff" stroke-width="0.12" font-family='"Liberation Sans", sans-serif' textLength="77.3" lengthAdjust="spacingAndGlyphs">based on ESRH:</text>
<text x="1137.4" y="657.8" font-size="10" fill="#fff" stroke="#fff" stroke-width="0.12" font-family='"Liberation Sans", sans-serif' textLength="7" lengthAdjust="spacingAndGlyphs">--</text>
<text x="1033.6" y="668.7" font-size="10" fill="#fff" stroke="#fff" stroke-width="0.12" font-family='"Liberation Sans", sans-serif' textLength="79.2" lengthAdjust="spacingAndGlyphs">based on EBWD:</text>
<text x="1137.4" y="668.7" font-size="10" fill="#fff" stroke="#fff" stroke-width="0.12" font-family='"Liberation Sans", sans-serif' textLength="7" lengthAdjust="spacingAndGlyphs">--</text>
<text x="1033.6" y="680.1" font-size="10" fill="#fff" stroke="#fff" stroke-width="0.12" font-family='"Liberation Sans", sans-serif' textLength="74.6" lengthAdjust="spacingAndGlyphs">based on STPC:</text>
<text x="1137.4" y="680.1" font-size="10" fill="#fff" stroke="#fff" stroke-width="0.12" font-family='"Liberation Sans", sans-serif' textLength="20.9" lengthAdjust="spacingAndGlyphs">0.06</text>
<text x="1033.6" y="690.9" font-size="10" fill="#fff" stroke="#fff" stroke-width="0.12" font-family='"Liberation Sans", sans-serif' textLength="95.7" lengthAdjust="spacingAndGlyphs">based on STP_fixed:</text>
<text x="1137.4" y="690.9" font-size="10" fill="#fff" stroke="#fff" stroke-width="0.12" font-family='"Liberation Sans", sans-serif' textLength="20.9" lengthAdjust="spacingAndGlyphs">0.05</text>
</svg>
</body></html>
